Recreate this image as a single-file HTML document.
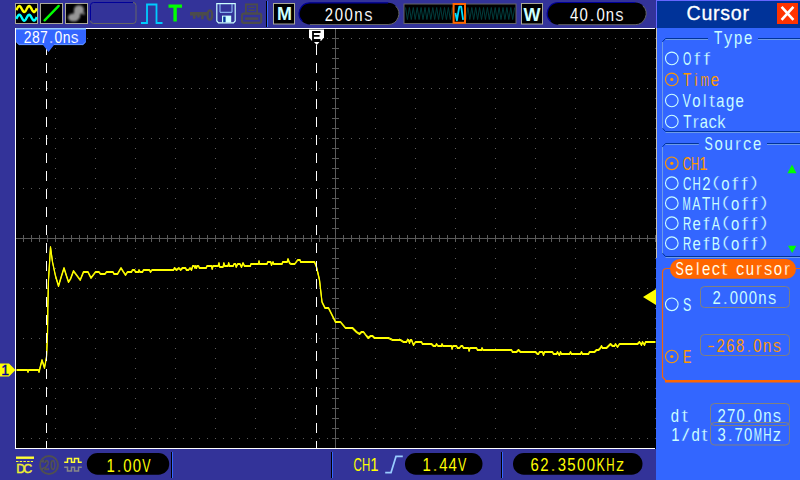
<!DOCTYPE html>
<html><head><meta charset="utf-8"><title>scope</title>
<style>
html,body{margin:0;padding:0;background:#333399;}
body{width:800px;height:480px;position:relative;overflow:hidden;font-family:"Liberation Sans",sans-serif;}
.a{position:absolute;box-sizing:border-box;}
.t{position:absolute;white-space:pre;line-height:1;}
svg{position:absolute;left:0;top:0;}
</style></head><body>

<div class="a" style="left:15px;top:28px;width:641px;height:421px;background:#000;"></div>
<div class="a" style="left:15px;top:28px;width:640px;height:421px;border-left:1px solid #fff;border-top:1px solid #fff;border-bottom:1px solid #fff;"></div>
<svg width="800" height="480" viewBox="0 0 800 480">
<g fill="#5a5a5a" shape-rendering="crispEdges">
<rect x="23" y="38" width="1" height="1"/>
<rect x="31" y="38" width="1" height="1"/>
<rect x="39" y="38" width="1" height="1"/>
<rect x="47" y="38" width="1" height="1"/>
<rect x="55" y="38" width="1" height="1"/>
<rect x="63" y="38" width="1" height="1"/>
<rect x="71" y="38" width="1" height="1"/>
<rect x="79" y="38" width="1" height="1"/>
<rect x="87" y="38" width="1" height="1"/>
<rect x="95" y="38" width="1" height="1"/>
<rect x="103" y="38" width="1" height="1"/>
<rect x="111" y="38" width="1" height="1"/>
<rect x="119" y="38" width="1" height="1"/>
<rect x="127" y="38" width="1" height="1"/>
<rect x="135" y="38" width="1" height="1"/>
<rect x="143" y="38" width="1" height="1"/>
<rect x="151" y="38" width="1" height="1"/>
<rect x="159" y="38" width="1" height="1"/>
<rect x="167" y="38" width="1" height="1"/>
<rect x="175" y="38" width="1" height="1"/>
<rect x="183" y="38" width="1" height="1"/>
<rect x="191" y="38" width="1" height="1"/>
<rect x="199" y="38" width="1" height="1"/>
<rect x="207" y="38" width="1" height="1"/>
<rect x="215" y="38" width="1" height="1"/>
<rect x="223" y="38" width="1" height="1"/>
<rect x="231" y="38" width="1" height="1"/>
<rect x="239" y="38" width="1" height="1"/>
<rect x="247" y="38" width="1" height="1"/>
<rect x="255" y="38" width="1" height="1"/>
<rect x="263" y="38" width="1" height="1"/>
<rect x="271" y="38" width="1" height="1"/>
<rect x="279" y="38" width="1" height="1"/>
<rect x="287" y="38" width="1" height="1"/>
<rect x="295" y="38" width="1" height="1"/>
<rect x="303" y="38" width="1" height="1"/>
<rect x="311" y="38" width="1" height="1"/>
<rect x="319" y="38" width="1" height="1"/>
<rect x="327" y="38" width="1" height="1"/>
<rect x="335" y="38" width="1" height="1"/>
<rect x="343" y="38" width="1" height="1"/>
<rect x="351" y="38" width="1" height="1"/>
<rect x="359" y="38" width="1" height="1"/>
<rect x="367" y="38" width="1" height="1"/>
<rect x="375" y="38" width="1" height="1"/>
<rect x="383" y="38" width="1" height="1"/>
<rect x="391" y="38" width="1" height="1"/>
<rect x="399" y="38" width="1" height="1"/>
<rect x="407" y="38" width="1" height="1"/>
<rect x="415" y="38" width="1" height="1"/>
<rect x="423" y="38" width="1" height="1"/>
<rect x="431" y="38" width="1" height="1"/>
<rect x="439" y="38" width="1" height="1"/>
<rect x="447" y="38" width="1" height="1"/>
<rect x="455" y="38" width="1" height="1"/>
<rect x="463" y="38" width="1" height="1"/>
<rect x="471" y="38" width="1" height="1"/>
<rect x="479" y="38" width="1" height="1"/>
<rect x="487" y="38" width="1" height="1"/>
<rect x="495" y="38" width="1" height="1"/>
<rect x="503" y="38" width="1" height="1"/>
<rect x="511" y="38" width="1" height="1"/>
<rect x="519" y="38" width="1" height="1"/>
<rect x="527" y="38" width="1" height="1"/>
<rect x="535" y="38" width="1" height="1"/>
<rect x="543" y="38" width="1" height="1"/>
<rect x="551" y="38" width="1" height="1"/>
<rect x="559" y="38" width="1" height="1"/>
<rect x="567" y="38" width="1" height="1"/>
<rect x="575" y="38" width="1" height="1"/>
<rect x="583" y="38" width="1" height="1"/>
<rect x="591" y="38" width="1" height="1"/>
<rect x="599" y="38" width="1" height="1"/>
<rect x="607" y="38" width="1" height="1"/>
<rect x="615" y="38" width="1" height="1"/>
<rect x="623" y="38" width="1" height="1"/>
<rect x="631" y="38" width="1" height="1"/>
<rect x="639" y="38" width="1" height="1"/>
<rect x="647" y="38" width="1" height="1"/>
<rect x="655" y="38" width="1" height="1"/>
<rect x="23" y="88" width="1" height="1"/>
<rect x="31" y="88" width="1" height="1"/>
<rect x="39" y="88" width="1" height="1"/>
<rect x="47" y="88" width="1" height="1"/>
<rect x="55" y="88" width="1" height="1"/>
<rect x="63" y="88" width="1" height="1"/>
<rect x="71" y="88" width="1" height="1"/>
<rect x="79" y="88" width="1" height="1"/>
<rect x="87" y="88" width="1" height="1"/>
<rect x="95" y="88" width="1" height="1"/>
<rect x="103" y="88" width="1" height="1"/>
<rect x="111" y="88" width="1" height="1"/>
<rect x="119" y="88" width="1" height="1"/>
<rect x="127" y="88" width="1" height="1"/>
<rect x="135" y="88" width="1" height="1"/>
<rect x="143" y="88" width="1" height="1"/>
<rect x="151" y="88" width="1" height="1"/>
<rect x="159" y="88" width="1" height="1"/>
<rect x="167" y="88" width="1" height="1"/>
<rect x="175" y="88" width="1" height="1"/>
<rect x="183" y="88" width="1" height="1"/>
<rect x="191" y="88" width="1" height="1"/>
<rect x="199" y="88" width="1" height="1"/>
<rect x="207" y="88" width="1" height="1"/>
<rect x="215" y="88" width="1" height="1"/>
<rect x="223" y="88" width="1" height="1"/>
<rect x="231" y="88" width="1" height="1"/>
<rect x="239" y="88" width="1" height="1"/>
<rect x="247" y="88" width="1" height="1"/>
<rect x="255" y="88" width="1" height="1"/>
<rect x="263" y="88" width="1" height="1"/>
<rect x="271" y="88" width="1" height="1"/>
<rect x="279" y="88" width="1" height="1"/>
<rect x="287" y="88" width="1" height="1"/>
<rect x="295" y="88" width="1" height="1"/>
<rect x="303" y="88" width="1" height="1"/>
<rect x="311" y="88" width="1" height="1"/>
<rect x="319" y="88" width="1" height="1"/>
<rect x="327" y="88" width="1" height="1"/>
<rect x="335" y="88" width="1" height="1"/>
<rect x="343" y="88" width="1" height="1"/>
<rect x="351" y="88" width="1" height="1"/>
<rect x="359" y="88" width="1" height="1"/>
<rect x="367" y="88" width="1" height="1"/>
<rect x="375" y="88" width="1" height="1"/>
<rect x="383" y="88" width="1" height="1"/>
<rect x="391" y="88" width="1" height="1"/>
<rect x="399" y="88" width="1" height="1"/>
<rect x="407" y="88" width="1" height="1"/>
<rect x="415" y="88" width="1" height="1"/>
<rect x="423" y="88" width="1" height="1"/>
<rect x="431" y="88" width="1" height="1"/>
<rect x="439" y="88" width="1" height="1"/>
<rect x="447" y="88" width="1" height="1"/>
<rect x="455" y="88" width="1" height="1"/>
<rect x="463" y="88" width="1" height="1"/>
<rect x="471" y="88" width="1" height="1"/>
<rect x="479" y="88" width="1" height="1"/>
<rect x="487" y="88" width="1" height="1"/>
<rect x="495" y="88" width="1" height="1"/>
<rect x="503" y="88" width="1" height="1"/>
<rect x="511" y="88" width="1" height="1"/>
<rect x="519" y="88" width="1" height="1"/>
<rect x="527" y="88" width="1" height="1"/>
<rect x="535" y="88" width="1" height="1"/>
<rect x="543" y="88" width="1" height="1"/>
<rect x="551" y="88" width="1" height="1"/>
<rect x="559" y="88" width="1" height="1"/>
<rect x="567" y="88" width="1" height="1"/>
<rect x="575" y="88" width="1" height="1"/>
<rect x="583" y="88" width="1" height="1"/>
<rect x="591" y="88" width="1" height="1"/>
<rect x="599" y="88" width="1" height="1"/>
<rect x="607" y="88" width="1" height="1"/>
<rect x="615" y="88" width="1" height="1"/>
<rect x="623" y="88" width="1" height="1"/>
<rect x="631" y="88" width="1" height="1"/>
<rect x="639" y="88" width="1" height="1"/>
<rect x="647" y="88" width="1" height="1"/>
<rect x="655" y="88" width="1" height="1"/>
<rect x="23" y="138" width="1" height="1"/>
<rect x="31" y="138" width="1" height="1"/>
<rect x="39" y="138" width="1" height="1"/>
<rect x="47" y="138" width="1" height="1"/>
<rect x="55" y="138" width="1" height="1"/>
<rect x="63" y="138" width="1" height="1"/>
<rect x="71" y="138" width="1" height="1"/>
<rect x="79" y="138" width="1" height="1"/>
<rect x="87" y="138" width="1" height="1"/>
<rect x="95" y="138" width="1" height="1"/>
<rect x="103" y="138" width="1" height="1"/>
<rect x="111" y="138" width="1" height="1"/>
<rect x="119" y="138" width="1" height="1"/>
<rect x="127" y="138" width="1" height="1"/>
<rect x="135" y="138" width="1" height="1"/>
<rect x="143" y="138" width="1" height="1"/>
<rect x="151" y="138" width="1" height="1"/>
<rect x="159" y="138" width="1" height="1"/>
<rect x="167" y="138" width="1" height="1"/>
<rect x="175" y="138" width="1" height="1"/>
<rect x="183" y="138" width="1" height="1"/>
<rect x="191" y="138" width="1" height="1"/>
<rect x="199" y="138" width="1" height="1"/>
<rect x="207" y="138" width="1" height="1"/>
<rect x="215" y="138" width="1" height="1"/>
<rect x="223" y="138" width="1" height="1"/>
<rect x="231" y="138" width="1" height="1"/>
<rect x="239" y="138" width="1" height="1"/>
<rect x="247" y="138" width="1" height="1"/>
<rect x="255" y="138" width="1" height="1"/>
<rect x="263" y="138" width="1" height="1"/>
<rect x="271" y="138" width="1" height="1"/>
<rect x="279" y="138" width="1" height="1"/>
<rect x="287" y="138" width="1" height="1"/>
<rect x="295" y="138" width="1" height="1"/>
<rect x="303" y="138" width="1" height="1"/>
<rect x="311" y="138" width="1" height="1"/>
<rect x="319" y="138" width="1" height="1"/>
<rect x="327" y="138" width="1" height="1"/>
<rect x="335" y="138" width="1" height="1"/>
<rect x="343" y="138" width="1" height="1"/>
<rect x="351" y="138" width="1" height="1"/>
<rect x="359" y="138" width="1" height="1"/>
<rect x="367" y="138" width="1" height="1"/>
<rect x="375" y="138" width="1" height="1"/>
<rect x="383" y="138" width="1" height="1"/>
<rect x="391" y="138" width="1" height="1"/>
<rect x="399" y="138" width="1" height="1"/>
<rect x="407" y="138" width="1" height="1"/>
<rect x="415" y="138" width="1" height="1"/>
<rect x="423" y="138" width="1" height="1"/>
<rect x="431" y="138" width="1" height="1"/>
<rect x="439" y="138" width="1" height="1"/>
<rect x="447" y="138" width="1" height="1"/>
<rect x="455" y="138" width="1" height="1"/>
<rect x="463" y="138" width="1" height="1"/>
<rect x="471" y="138" width="1" height="1"/>
<rect x="479" y="138" width="1" height="1"/>
<rect x="487" y="138" width="1" height="1"/>
<rect x="495" y="138" width="1" height="1"/>
<rect x="503" y="138" width="1" height="1"/>
<rect x="511" y="138" width="1" height="1"/>
<rect x="519" y="138" width="1" height="1"/>
<rect x="527" y="138" width="1" height="1"/>
<rect x="535" y="138" width="1" height="1"/>
<rect x="543" y="138" width="1" height="1"/>
<rect x="551" y="138" width="1" height="1"/>
<rect x="559" y="138" width="1" height="1"/>
<rect x="567" y="138" width="1" height="1"/>
<rect x="575" y="138" width="1" height="1"/>
<rect x="583" y="138" width="1" height="1"/>
<rect x="591" y="138" width="1" height="1"/>
<rect x="599" y="138" width="1" height="1"/>
<rect x="607" y="138" width="1" height="1"/>
<rect x="615" y="138" width="1" height="1"/>
<rect x="623" y="138" width="1" height="1"/>
<rect x="631" y="138" width="1" height="1"/>
<rect x="639" y="138" width="1" height="1"/>
<rect x="647" y="138" width="1" height="1"/>
<rect x="655" y="138" width="1" height="1"/>
<rect x="23" y="188" width="1" height="1"/>
<rect x="31" y="188" width="1" height="1"/>
<rect x="39" y="188" width="1" height="1"/>
<rect x="47" y="188" width="1" height="1"/>
<rect x="55" y="188" width="1" height="1"/>
<rect x="63" y="188" width="1" height="1"/>
<rect x="71" y="188" width="1" height="1"/>
<rect x="79" y="188" width="1" height="1"/>
<rect x="87" y="188" width="1" height="1"/>
<rect x="95" y="188" width="1" height="1"/>
<rect x="103" y="188" width="1" height="1"/>
<rect x="111" y="188" width="1" height="1"/>
<rect x="119" y="188" width="1" height="1"/>
<rect x="127" y="188" width="1" height="1"/>
<rect x="135" y="188" width="1" height="1"/>
<rect x="143" y="188" width="1" height="1"/>
<rect x="151" y="188" width="1" height="1"/>
<rect x="159" y="188" width="1" height="1"/>
<rect x="167" y="188" width="1" height="1"/>
<rect x="175" y="188" width="1" height="1"/>
<rect x="183" y="188" width="1" height="1"/>
<rect x="191" y="188" width="1" height="1"/>
<rect x="199" y="188" width="1" height="1"/>
<rect x="207" y="188" width="1" height="1"/>
<rect x="215" y="188" width="1" height="1"/>
<rect x="223" y="188" width="1" height="1"/>
<rect x="231" y="188" width="1" height="1"/>
<rect x="239" y="188" width="1" height="1"/>
<rect x="247" y="188" width="1" height="1"/>
<rect x="255" y="188" width="1" height="1"/>
<rect x="263" y="188" width="1" height="1"/>
<rect x="271" y="188" width="1" height="1"/>
<rect x="279" y="188" width="1" height="1"/>
<rect x="287" y="188" width="1" height="1"/>
<rect x="295" y="188" width="1" height="1"/>
<rect x="303" y="188" width="1" height="1"/>
<rect x="311" y="188" width="1" height="1"/>
<rect x="319" y="188" width="1" height="1"/>
<rect x="327" y="188" width="1" height="1"/>
<rect x="335" y="188" width="1" height="1"/>
<rect x="343" y="188" width="1" height="1"/>
<rect x="351" y="188" width="1" height="1"/>
<rect x="359" y="188" width="1" height="1"/>
<rect x="367" y="188" width="1" height="1"/>
<rect x="375" y="188" width="1" height="1"/>
<rect x="383" y="188" width="1" height="1"/>
<rect x="391" y="188" width="1" height="1"/>
<rect x="399" y="188" width="1" height="1"/>
<rect x="407" y="188" width="1" height="1"/>
<rect x="415" y="188" width="1" height="1"/>
<rect x="423" y="188" width="1" height="1"/>
<rect x="431" y="188" width="1" height="1"/>
<rect x="439" y="188" width="1" height="1"/>
<rect x="447" y="188" width="1" height="1"/>
<rect x="455" y="188" width="1" height="1"/>
<rect x="463" y="188" width="1" height="1"/>
<rect x="471" y="188" width="1" height="1"/>
<rect x="479" y="188" width="1" height="1"/>
<rect x="487" y="188" width="1" height="1"/>
<rect x="495" y="188" width="1" height="1"/>
<rect x="503" y="188" width="1" height="1"/>
<rect x="511" y="188" width="1" height="1"/>
<rect x="519" y="188" width="1" height="1"/>
<rect x="527" y="188" width="1" height="1"/>
<rect x="535" y="188" width="1" height="1"/>
<rect x="543" y="188" width="1" height="1"/>
<rect x="551" y="188" width="1" height="1"/>
<rect x="559" y="188" width="1" height="1"/>
<rect x="567" y="188" width="1" height="1"/>
<rect x="575" y="188" width="1" height="1"/>
<rect x="583" y="188" width="1" height="1"/>
<rect x="591" y="188" width="1" height="1"/>
<rect x="599" y="188" width="1" height="1"/>
<rect x="607" y="188" width="1" height="1"/>
<rect x="615" y="188" width="1" height="1"/>
<rect x="623" y="188" width="1" height="1"/>
<rect x="631" y="188" width="1" height="1"/>
<rect x="639" y="188" width="1" height="1"/>
<rect x="647" y="188" width="1" height="1"/>
<rect x="655" y="188" width="1" height="1"/>
<rect x="23" y="288" width="1" height="1"/>
<rect x="31" y="288" width="1" height="1"/>
<rect x="39" y="288" width="1" height="1"/>
<rect x="47" y="288" width="1" height="1"/>
<rect x="55" y="288" width="1" height="1"/>
<rect x="63" y="288" width="1" height="1"/>
<rect x="71" y="288" width="1" height="1"/>
<rect x="79" y="288" width="1" height="1"/>
<rect x="87" y="288" width="1" height="1"/>
<rect x="95" y="288" width="1" height="1"/>
<rect x="103" y="288" width="1" height="1"/>
<rect x="111" y="288" width="1" height="1"/>
<rect x="119" y="288" width="1" height="1"/>
<rect x="127" y="288" width="1" height="1"/>
<rect x="135" y="288" width="1" height="1"/>
<rect x="143" y="288" width="1" height="1"/>
<rect x="151" y="288" width="1" height="1"/>
<rect x="159" y="288" width="1" height="1"/>
<rect x="167" y="288" width="1" height="1"/>
<rect x="175" y="288" width="1" height="1"/>
<rect x="183" y="288" width="1" height="1"/>
<rect x="191" y="288" width="1" height="1"/>
<rect x="199" y="288" width="1" height="1"/>
<rect x="207" y="288" width="1" height="1"/>
<rect x="215" y="288" width="1" height="1"/>
<rect x="223" y="288" width="1" height="1"/>
<rect x="231" y="288" width="1" height="1"/>
<rect x="239" y="288" width="1" height="1"/>
<rect x="247" y="288" width="1" height="1"/>
<rect x="255" y="288" width="1" height="1"/>
<rect x="263" y="288" width="1" height="1"/>
<rect x="271" y="288" width="1" height="1"/>
<rect x="279" y="288" width="1" height="1"/>
<rect x="287" y="288" width="1" height="1"/>
<rect x="295" y="288" width="1" height="1"/>
<rect x="303" y="288" width="1" height="1"/>
<rect x="311" y="288" width="1" height="1"/>
<rect x="319" y="288" width="1" height="1"/>
<rect x="327" y="288" width="1" height="1"/>
<rect x="335" y="288" width="1" height="1"/>
<rect x="343" y="288" width="1" height="1"/>
<rect x="351" y="288" width="1" height="1"/>
<rect x="359" y="288" width="1" height="1"/>
<rect x="367" y="288" width="1" height="1"/>
<rect x="375" y="288" width="1" height="1"/>
<rect x="383" y="288" width="1" height="1"/>
<rect x="391" y="288" width="1" height="1"/>
<rect x="399" y="288" width="1" height="1"/>
<rect x="407" y="288" width="1" height="1"/>
<rect x="415" y="288" width="1" height="1"/>
<rect x="423" y="288" width="1" height="1"/>
<rect x="431" y="288" width="1" height="1"/>
<rect x="439" y="288" width="1" height="1"/>
<rect x="447" y="288" width="1" height="1"/>
<rect x="455" y="288" width="1" height="1"/>
<rect x="463" y="288" width="1" height="1"/>
<rect x="471" y="288" width="1" height="1"/>
<rect x="479" y="288" width="1" height="1"/>
<rect x="487" y="288" width="1" height="1"/>
<rect x="495" y="288" width="1" height="1"/>
<rect x="503" y="288" width="1" height="1"/>
<rect x="511" y="288" width="1" height="1"/>
<rect x="519" y="288" width="1" height="1"/>
<rect x="527" y="288" width="1" height="1"/>
<rect x="535" y="288" width="1" height="1"/>
<rect x="543" y="288" width="1" height="1"/>
<rect x="551" y="288" width="1" height="1"/>
<rect x="559" y="288" width="1" height="1"/>
<rect x="567" y="288" width="1" height="1"/>
<rect x="575" y="288" width="1" height="1"/>
<rect x="583" y="288" width="1" height="1"/>
<rect x="591" y="288" width="1" height="1"/>
<rect x="599" y="288" width="1" height="1"/>
<rect x="607" y="288" width="1" height="1"/>
<rect x="615" y="288" width="1" height="1"/>
<rect x="623" y="288" width="1" height="1"/>
<rect x="631" y="288" width="1" height="1"/>
<rect x="639" y="288" width="1" height="1"/>
<rect x="647" y="288" width="1" height="1"/>
<rect x="655" y="288" width="1" height="1"/>
<rect x="23" y="338" width="1" height="1"/>
<rect x="31" y="338" width="1" height="1"/>
<rect x="39" y="338" width="1" height="1"/>
<rect x="47" y="338" width="1" height="1"/>
<rect x="55" y="338" width="1" height="1"/>
<rect x="63" y="338" width="1" height="1"/>
<rect x="71" y="338" width="1" height="1"/>
<rect x="79" y="338" width="1" height="1"/>
<rect x="87" y="338" width="1" height="1"/>
<rect x="95" y="338" width="1" height="1"/>
<rect x="103" y="338" width="1" height="1"/>
<rect x="111" y="338" width="1" height="1"/>
<rect x="119" y="338" width="1" height="1"/>
<rect x="127" y="338" width="1" height="1"/>
<rect x="135" y="338" width="1" height="1"/>
<rect x="143" y="338" width="1" height="1"/>
<rect x="151" y="338" width="1" height="1"/>
<rect x="159" y="338" width="1" height="1"/>
<rect x="167" y="338" width="1" height="1"/>
<rect x="175" y="338" width="1" height="1"/>
<rect x="183" y="338" width="1" height="1"/>
<rect x="191" y="338" width="1" height="1"/>
<rect x="199" y="338" width="1" height="1"/>
<rect x="207" y="338" width="1" height="1"/>
<rect x="215" y="338" width="1" height="1"/>
<rect x="223" y="338" width="1" height="1"/>
<rect x="231" y="338" width="1" height="1"/>
<rect x="239" y="338" width="1" height="1"/>
<rect x="247" y="338" width="1" height="1"/>
<rect x="255" y="338" width="1" height="1"/>
<rect x="263" y="338" width="1" height="1"/>
<rect x="271" y="338" width="1" height="1"/>
<rect x="279" y="338" width="1" height="1"/>
<rect x="287" y="338" width="1" height="1"/>
<rect x="295" y="338" width="1" height="1"/>
<rect x="303" y="338" width="1" height="1"/>
<rect x="311" y="338" width="1" height="1"/>
<rect x="319" y="338" width="1" height="1"/>
<rect x="327" y="338" width="1" height="1"/>
<rect x="335" y="338" width="1" height="1"/>
<rect x="343" y="338" width="1" height="1"/>
<rect x="351" y="338" width="1" height="1"/>
<rect x="359" y="338" width="1" height="1"/>
<rect x="367" y="338" width="1" height="1"/>
<rect x="375" y="338" width="1" height="1"/>
<rect x="383" y="338" width="1" height="1"/>
<rect x="391" y="338" width="1" height="1"/>
<rect x="399" y="338" width="1" height="1"/>
<rect x="407" y="338" width="1" height="1"/>
<rect x="415" y="338" width="1" height="1"/>
<rect x="423" y="338" width="1" height="1"/>
<rect x="431" y="338" width="1" height="1"/>
<rect x="439" y="338" width="1" height="1"/>
<rect x="447" y="338" width="1" height="1"/>
<rect x="455" y="338" width="1" height="1"/>
<rect x="463" y="338" width="1" height="1"/>
<rect x="471" y="338" width="1" height="1"/>
<rect x="479" y="338" width="1" height="1"/>
<rect x="487" y="338" width="1" height="1"/>
<rect x="495" y="338" width="1" height="1"/>
<rect x="503" y="338" width="1" height="1"/>
<rect x="511" y="338" width="1" height="1"/>
<rect x="519" y="338" width="1" height="1"/>
<rect x="527" y="338" width="1" height="1"/>
<rect x="535" y="338" width="1" height="1"/>
<rect x="543" y="338" width="1" height="1"/>
<rect x="551" y="338" width="1" height="1"/>
<rect x="559" y="338" width="1" height="1"/>
<rect x="567" y="338" width="1" height="1"/>
<rect x="575" y="338" width="1" height="1"/>
<rect x="583" y="338" width="1" height="1"/>
<rect x="591" y="338" width="1" height="1"/>
<rect x="599" y="338" width="1" height="1"/>
<rect x="607" y="338" width="1" height="1"/>
<rect x="615" y="338" width="1" height="1"/>
<rect x="623" y="338" width="1" height="1"/>
<rect x="631" y="338" width="1" height="1"/>
<rect x="639" y="338" width="1" height="1"/>
<rect x="647" y="338" width="1" height="1"/>
<rect x="655" y="338" width="1" height="1"/>
<rect x="23" y="388" width="1" height="1"/>
<rect x="31" y="388" width="1" height="1"/>
<rect x="39" y="388" width="1" height="1"/>
<rect x="47" y="388" width="1" height="1"/>
<rect x="55" y="388" width="1" height="1"/>
<rect x="63" y="388" width="1" height="1"/>
<rect x="71" y="388" width="1" height="1"/>
<rect x="79" y="388" width="1" height="1"/>
<rect x="87" y="388" width="1" height="1"/>
<rect x="95" y="388" width="1" height="1"/>
<rect x="103" y="388" width="1" height="1"/>
<rect x="111" y="388" width="1" height="1"/>
<rect x="119" y="388" width="1" height="1"/>
<rect x="127" y="388" width="1" height="1"/>
<rect x="135" y="388" width="1" height="1"/>
<rect x="143" y="388" width="1" height="1"/>
<rect x="151" y="388" width="1" height="1"/>
<rect x="159" y="388" width="1" height="1"/>
<rect x="167" y="388" width="1" height="1"/>
<rect x="175" y="388" width="1" height="1"/>
<rect x="183" y="388" width="1" height="1"/>
<rect x="191" y="388" width="1" height="1"/>
<rect x="199" y="388" width="1" height="1"/>
<rect x="207" y="388" width="1" height="1"/>
<rect x="215" y="388" width="1" height="1"/>
<rect x="223" y="388" width="1" height="1"/>
<rect x="231" y="388" width="1" height="1"/>
<rect x="239" y="388" width="1" height="1"/>
<rect x="247" y="388" width="1" height="1"/>
<rect x="255" y="388" width="1" height="1"/>
<rect x="263" y="388" width="1" height="1"/>
<rect x="271" y="388" width="1" height="1"/>
<rect x="279" y="388" width="1" height="1"/>
<rect x="287" y="388" width="1" height="1"/>
<rect x="295" y="388" width="1" height="1"/>
<rect x="303" y="388" width="1" height="1"/>
<rect x="311" y="388" width="1" height="1"/>
<rect x="319" y="388" width="1" height="1"/>
<rect x="327" y="388" width="1" height="1"/>
<rect x="335" y="388" width="1" height="1"/>
<rect x="343" y="388" width="1" height="1"/>
<rect x="351" y="388" width="1" height="1"/>
<rect x="359" y="388" width="1" height="1"/>
<rect x="367" y="388" width="1" height="1"/>
<rect x="375" y="388" width="1" height="1"/>
<rect x="383" y="388" width="1" height="1"/>
<rect x="391" y="388" width="1" height="1"/>
<rect x="399" y="388" width="1" height="1"/>
<rect x="407" y="388" width="1" height="1"/>
<rect x="415" y="388" width="1" height="1"/>
<rect x="423" y="388" width="1" height="1"/>
<rect x="431" y="388" width="1" height="1"/>
<rect x="439" y="388" width="1" height="1"/>
<rect x="447" y="388" width="1" height="1"/>
<rect x="455" y="388" width="1" height="1"/>
<rect x="463" y="388" width="1" height="1"/>
<rect x="471" y="388" width="1" height="1"/>
<rect x="479" y="388" width="1" height="1"/>
<rect x="487" y="388" width="1" height="1"/>
<rect x="495" y="388" width="1" height="1"/>
<rect x="503" y="388" width="1" height="1"/>
<rect x="511" y="388" width="1" height="1"/>
<rect x="519" y="388" width="1" height="1"/>
<rect x="527" y="388" width="1" height="1"/>
<rect x="535" y="388" width="1" height="1"/>
<rect x="543" y="388" width="1" height="1"/>
<rect x="551" y="388" width="1" height="1"/>
<rect x="559" y="388" width="1" height="1"/>
<rect x="567" y="388" width="1" height="1"/>
<rect x="575" y="388" width="1" height="1"/>
<rect x="583" y="388" width="1" height="1"/>
<rect x="591" y="388" width="1" height="1"/>
<rect x="599" y="388" width="1" height="1"/>
<rect x="607" y="388" width="1" height="1"/>
<rect x="615" y="388" width="1" height="1"/>
<rect x="623" y="388" width="1" height="1"/>
<rect x="631" y="388" width="1" height="1"/>
<rect x="639" y="388" width="1" height="1"/>
<rect x="647" y="388" width="1" height="1"/>
<rect x="655" y="388" width="1" height="1"/>
<rect x="23" y="438" width="1" height="1"/>
<rect x="31" y="438" width="1" height="1"/>
<rect x="39" y="438" width="1" height="1"/>
<rect x="47" y="438" width="1" height="1"/>
<rect x="55" y="438" width="1" height="1"/>
<rect x="63" y="438" width="1" height="1"/>
<rect x="71" y="438" width="1" height="1"/>
<rect x="79" y="438" width="1" height="1"/>
<rect x="87" y="438" width="1" height="1"/>
<rect x="95" y="438" width="1" height="1"/>
<rect x="103" y="438" width="1" height="1"/>
<rect x="111" y="438" width="1" height="1"/>
<rect x="119" y="438" width="1" height="1"/>
<rect x="127" y="438" width="1" height="1"/>
<rect x="135" y="438" width="1" height="1"/>
<rect x="143" y="438" width="1" height="1"/>
<rect x="151" y="438" width="1" height="1"/>
<rect x="159" y="438" width="1" height="1"/>
<rect x="167" y="438" width="1" height="1"/>
<rect x="175" y="438" width="1" height="1"/>
<rect x="183" y="438" width="1" height="1"/>
<rect x="191" y="438" width="1" height="1"/>
<rect x="199" y="438" width="1" height="1"/>
<rect x="207" y="438" width="1" height="1"/>
<rect x="215" y="438" width="1" height="1"/>
<rect x="223" y="438" width="1" height="1"/>
<rect x="231" y="438" width="1" height="1"/>
<rect x="239" y="438" width="1" height="1"/>
<rect x="247" y="438" width="1" height="1"/>
<rect x="255" y="438" width="1" height="1"/>
<rect x="263" y="438" width="1" height="1"/>
<rect x="271" y="438" width="1" height="1"/>
<rect x="279" y="438" width="1" height="1"/>
<rect x="287" y="438" width="1" height="1"/>
<rect x="295" y="438" width="1" height="1"/>
<rect x="303" y="438" width="1" height="1"/>
<rect x="311" y="438" width="1" height="1"/>
<rect x="319" y="438" width="1" height="1"/>
<rect x="327" y="438" width="1" height="1"/>
<rect x="335" y="438" width="1" height="1"/>
<rect x="343" y="438" width="1" height="1"/>
<rect x="351" y="438" width="1" height="1"/>
<rect x="359" y="438" width="1" height="1"/>
<rect x="367" y="438" width="1" height="1"/>
<rect x="375" y="438" width="1" height="1"/>
<rect x="383" y="438" width="1" height="1"/>
<rect x="391" y="438" width="1" height="1"/>
<rect x="399" y="438" width="1" height="1"/>
<rect x="407" y="438" width="1" height="1"/>
<rect x="415" y="438" width="1" height="1"/>
<rect x="423" y="438" width="1" height="1"/>
<rect x="431" y="438" width="1" height="1"/>
<rect x="439" y="438" width="1" height="1"/>
<rect x="447" y="438" width="1" height="1"/>
<rect x="455" y="438" width="1" height="1"/>
<rect x="463" y="438" width="1" height="1"/>
<rect x="471" y="438" width="1" height="1"/>
<rect x="479" y="438" width="1" height="1"/>
<rect x="487" y="438" width="1" height="1"/>
<rect x="495" y="438" width="1" height="1"/>
<rect x="503" y="438" width="1" height="1"/>
<rect x="511" y="438" width="1" height="1"/>
<rect x="519" y="438" width="1" height="1"/>
<rect x="527" y="438" width="1" height="1"/>
<rect x="535" y="438" width="1" height="1"/>
<rect x="543" y="438" width="1" height="1"/>
<rect x="551" y="438" width="1" height="1"/>
<rect x="559" y="438" width="1" height="1"/>
<rect x="567" y="438" width="1" height="1"/>
<rect x="575" y="438" width="1" height="1"/>
<rect x="583" y="438" width="1" height="1"/>
<rect x="591" y="438" width="1" height="1"/>
<rect x="599" y="438" width="1" height="1"/>
<rect x="607" y="438" width="1" height="1"/>
<rect x="615" y="438" width="1" height="1"/>
<rect x="623" y="438" width="1" height="1"/>
<rect x="631" y="438" width="1" height="1"/>
<rect x="639" y="438" width="1" height="1"/>
<rect x="647" y="438" width="1" height="1"/>
<rect x="655" y="438" width="1" height="1"/>
<rect x="55" y="48" width="1" height="1"/>
<rect x="55" y="58" width="1" height="1"/>
<rect x="55" y="68" width="1" height="1"/>
<rect x="55" y="78" width="1" height="1"/>
<rect x="55" y="98" width="1" height="1"/>
<rect x="55" y="108" width="1" height="1"/>
<rect x="55" y="118" width="1" height="1"/>
<rect x="55" y="128" width="1" height="1"/>
<rect x="55" y="148" width="1" height="1"/>
<rect x="55" y="158" width="1" height="1"/>
<rect x="55" y="168" width="1" height="1"/>
<rect x="55" y="178" width="1" height="1"/>
<rect x="55" y="198" width="1" height="1"/>
<rect x="55" y="208" width="1" height="1"/>
<rect x="55" y="218" width="1" height="1"/>
<rect x="55" y="228" width="1" height="1"/>
<rect x="55" y="238" width="1" height="1"/>
<rect x="55" y="248" width="1" height="1"/>
<rect x="55" y="258" width="1" height="1"/>
<rect x="55" y="268" width="1" height="1"/>
<rect x="55" y="278" width="1" height="1"/>
<rect x="55" y="298" width="1" height="1"/>
<rect x="55" y="308" width="1" height="1"/>
<rect x="55" y="318" width="1" height="1"/>
<rect x="55" y="328" width="1" height="1"/>
<rect x="55" y="348" width="1" height="1"/>
<rect x="55" y="358" width="1" height="1"/>
<rect x="55" y="368" width="1" height="1"/>
<rect x="55" y="378" width="1" height="1"/>
<rect x="55" y="398" width="1" height="1"/>
<rect x="55" y="408" width="1" height="1"/>
<rect x="55" y="418" width="1" height="1"/>
<rect x="55" y="428" width="1" height="1"/>
<rect x="95" y="48" width="1" height="1"/>
<rect x="95" y="58" width="1" height="1"/>
<rect x="95" y="68" width="1" height="1"/>
<rect x="95" y="78" width="1" height="1"/>
<rect x="95" y="98" width="1" height="1"/>
<rect x="95" y="108" width="1" height="1"/>
<rect x="95" y="118" width="1" height="1"/>
<rect x="95" y="128" width="1" height="1"/>
<rect x="95" y="148" width="1" height="1"/>
<rect x="95" y="158" width="1" height="1"/>
<rect x="95" y="168" width="1" height="1"/>
<rect x="95" y="178" width="1" height="1"/>
<rect x="95" y="198" width="1" height="1"/>
<rect x="95" y="208" width="1" height="1"/>
<rect x="95" y="218" width="1" height="1"/>
<rect x="95" y="228" width="1" height="1"/>
<rect x="95" y="238" width="1" height="1"/>
<rect x="95" y="248" width="1" height="1"/>
<rect x="95" y="258" width="1" height="1"/>
<rect x="95" y="268" width="1" height="1"/>
<rect x="95" y="278" width="1" height="1"/>
<rect x="95" y="298" width="1" height="1"/>
<rect x="95" y="308" width="1" height="1"/>
<rect x="95" y="318" width="1" height="1"/>
<rect x="95" y="328" width="1" height="1"/>
<rect x="95" y="348" width="1" height="1"/>
<rect x="95" y="358" width="1" height="1"/>
<rect x="95" y="368" width="1" height="1"/>
<rect x="95" y="378" width="1" height="1"/>
<rect x="95" y="398" width="1" height="1"/>
<rect x="95" y="408" width="1" height="1"/>
<rect x="95" y="418" width="1" height="1"/>
<rect x="95" y="428" width="1" height="1"/>
<rect x="135" y="48" width="1" height="1"/>
<rect x="135" y="58" width="1" height="1"/>
<rect x="135" y="68" width="1" height="1"/>
<rect x="135" y="78" width="1" height="1"/>
<rect x="135" y="98" width="1" height="1"/>
<rect x="135" y="108" width="1" height="1"/>
<rect x="135" y="118" width="1" height="1"/>
<rect x="135" y="128" width="1" height="1"/>
<rect x="135" y="148" width="1" height="1"/>
<rect x="135" y="158" width="1" height="1"/>
<rect x="135" y="168" width="1" height="1"/>
<rect x="135" y="178" width="1" height="1"/>
<rect x="135" y="198" width="1" height="1"/>
<rect x="135" y="208" width="1" height="1"/>
<rect x="135" y="218" width="1" height="1"/>
<rect x="135" y="228" width="1" height="1"/>
<rect x="135" y="238" width="1" height="1"/>
<rect x="135" y="248" width="1" height="1"/>
<rect x="135" y="258" width="1" height="1"/>
<rect x="135" y="268" width="1" height="1"/>
<rect x="135" y="278" width="1" height="1"/>
<rect x="135" y="298" width="1" height="1"/>
<rect x="135" y="308" width="1" height="1"/>
<rect x="135" y="318" width="1" height="1"/>
<rect x="135" y="328" width="1" height="1"/>
<rect x="135" y="348" width="1" height="1"/>
<rect x="135" y="358" width="1" height="1"/>
<rect x="135" y="368" width="1" height="1"/>
<rect x="135" y="378" width="1" height="1"/>
<rect x="135" y="398" width="1" height="1"/>
<rect x="135" y="408" width="1" height="1"/>
<rect x="135" y="418" width="1" height="1"/>
<rect x="135" y="428" width="1" height="1"/>
<rect x="175" y="48" width="1" height="1"/>
<rect x="175" y="58" width="1" height="1"/>
<rect x="175" y="68" width="1" height="1"/>
<rect x="175" y="78" width="1" height="1"/>
<rect x="175" y="98" width="1" height="1"/>
<rect x="175" y="108" width="1" height="1"/>
<rect x="175" y="118" width="1" height="1"/>
<rect x="175" y="128" width="1" height="1"/>
<rect x="175" y="148" width="1" height="1"/>
<rect x="175" y="158" width="1" height="1"/>
<rect x="175" y="168" width="1" height="1"/>
<rect x="175" y="178" width="1" height="1"/>
<rect x="175" y="198" width="1" height="1"/>
<rect x="175" y="208" width="1" height="1"/>
<rect x="175" y="218" width="1" height="1"/>
<rect x="175" y="228" width="1" height="1"/>
<rect x="175" y="238" width="1" height="1"/>
<rect x="175" y="248" width="1" height="1"/>
<rect x="175" y="258" width="1" height="1"/>
<rect x="175" y="268" width="1" height="1"/>
<rect x="175" y="278" width="1" height="1"/>
<rect x="175" y="298" width="1" height="1"/>
<rect x="175" y="308" width="1" height="1"/>
<rect x="175" y="318" width="1" height="1"/>
<rect x="175" y="328" width="1" height="1"/>
<rect x="175" y="348" width="1" height="1"/>
<rect x="175" y="358" width="1" height="1"/>
<rect x="175" y="368" width="1" height="1"/>
<rect x="175" y="378" width="1" height="1"/>
<rect x="175" y="398" width="1" height="1"/>
<rect x="175" y="408" width="1" height="1"/>
<rect x="175" y="418" width="1" height="1"/>
<rect x="175" y="428" width="1" height="1"/>
<rect x="215" y="48" width="1" height="1"/>
<rect x="215" y="58" width="1" height="1"/>
<rect x="215" y="68" width="1" height="1"/>
<rect x="215" y="78" width="1" height="1"/>
<rect x="215" y="98" width="1" height="1"/>
<rect x="215" y="108" width="1" height="1"/>
<rect x="215" y="118" width="1" height="1"/>
<rect x="215" y="128" width="1" height="1"/>
<rect x="215" y="148" width="1" height="1"/>
<rect x="215" y="158" width="1" height="1"/>
<rect x="215" y="168" width="1" height="1"/>
<rect x="215" y="178" width="1" height="1"/>
<rect x="215" y="198" width="1" height="1"/>
<rect x="215" y="208" width="1" height="1"/>
<rect x="215" y="218" width="1" height="1"/>
<rect x="215" y="228" width="1" height="1"/>
<rect x="215" y="238" width="1" height="1"/>
<rect x="215" y="248" width="1" height="1"/>
<rect x="215" y="258" width="1" height="1"/>
<rect x="215" y="268" width="1" height="1"/>
<rect x="215" y="278" width="1" height="1"/>
<rect x="215" y="298" width="1" height="1"/>
<rect x="215" y="308" width="1" height="1"/>
<rect x="215" y="318" width="1" height="1"/>
<rect x="215" y="328" width="1" height="1"/>
<rect x="215" y="348" width="1" height="1"/>
<rect x="215" y="358" width="1" height="1"/>
<rect x="215" y="368" width="1" height="1"/>
<rect x="215" y="378" width="1" height="1"/>
<rect x="215" y="398" width="1" height="1"/>
<rect x="215" y="408" width="1" height="1"/>
<rect x="215" y="418" width="1" height="1"/>
<rect x="215" y="428" width="1" height="1"/>
<rect x="255" y="48" width="1" height="1"/>
<rect x="255" y="58" width="1" height="1"/>
<rect x="255" y="68" width="1" height="1"/>
<rect x="255" y="78" width="1" height="1"/>
<rect x="255" y="98" width="1" height="1"/>
<rect x="255" y="108" width="1" height="1"/>
<rect x="255" y="118" width="1" height="1"/>
<rect x="255" y="128" width="1" height="1"/>
<rect x="255" y="148" width="1" height="1"/>
<rect x="255" y="158" width="1" height="1"/>
<rect x="255" y="168" width="1" height="1"/>
<rect x="255" y="178" width="1" height="1"/>
<rect x="255" y="198" width="1" height="1"/>
<rect x="255" y="208" width="1" height="1"/>
<rect x="255" y="218" width="1" height="1"/>
<rect x="255" y="228" width="1" height="1"/>
<rect x="255" y="238" width="1" height="1"/>
<rect x="255" y="248" width="1" height="1"/>
<rect x="255" y="258" width="1" height="1"/>
<rect x="255" y="268" width="1" height="1"/>
<rect x="255" y="278" width="1" height="1"/>
<rect x="255" y="298" width="1" height="1"/>
<rect x="255" y="308" width="1" height="1"/>
<rect x="255" y="318" width="1" height="1"/>
<rect x="255" y="328" width="1" height="1"/>
<rect x="255" y="348" width="1" height="1"/>
<rect x="255" y="358" width="1" height="1"/>
<rect x="255" y="368" width="1" height="1"/>
<rect x="255" y="378" width="1" height="1"/>
<rect x="255" y="398" width="1" height="1"/>
<rect x="255" y="408" width="1" height="1"/>
<rect x="255" y="418" width="1" height="1"/>
<rect x="255" y="428" width="1" height="1"/>
<rect x="295" y="48" width="1" height="1"/>
<rect x="295" y="58" width="1" height="1"/>
<rect x="295" y="68" width="1" height="1"/>
<rect x="295" y="78" width="1" height="1"/>
<rect x="295" y="98" width="1" height="1"/>
<rect x="295" y="108" width="1" height="1"/>
<rect x="295" y="118" width="1" height="1"/>
<rect x="295" y="128" width="1" height="1"/>
<rect x="295" y="148" width="1" height="1"/>
<rect x="295" y="158" width="1" height="1"/>
<rect x="295" y="168" width="1" height="1"/>
<rect x="295" y="178" width="1" height="1"/>
<rect x="295" y="198" width="1" height="1"/>
<rect x="295" y="208" width="1" height="1"/>
<rect x="295" y="218" width="1" height="1"/>
<rect x="295" y="228" width="1" height="1"/>
<rect x="295" y="238" width="1" height="1"/>
<rect x="295" y="248" width="1" height="1"/>
<rect x="295" y="258" width="1" height="1"/>
<rect x="295" y="268" width="1" height="1"/>
<rect x="295" y="278" width="1" height="1"/>
<rect x="295" y="298" width="1" height="1"/>
<rect x="295" y="308" width="1" height="1"/>
<rect x="295" y="318" width="1" height="1"/>
<rect x="295" y="328" width="1" height="1"/>
<rect x="295" y="348" width="1" height="1"/>
<rect x="295" y="358" width="1" height="1"/>
<rect x="295" y="368" width="1" height="1"/>
<rect x="295" y="378" width="1" height="1"/>
<rect x="295" y="398" width="1" height="1"/>
<rect x="295" y="408" width="1" height="1"/>
<rect x="295" y="418" width="1" height="1"/>
<rect x="295" y="428" width="1" height="1"/>
<rect x="375" y="48" width="1" height="1"/>
<rect x="375" y="58" width="1" height="1"/>
<rect x="375" y="68" width="1" height="1"/>
<rect x="375" y="78" width="1" height="1"/>
<rect x="375" y="98" width="1" height="1"/>
<rect x="375" y="108" width="1" height="1"/>
<rect x="375" y="118" width="1" height="1"/>
<rect x="375" y="128" width="1" height="1"/>
<rect x="375" y="148" width="1" height="1"/>
<rect x="375" y="158" width="1" height="1"/>
<rect x="375" y="168" width="1" height="1"/>
<rect x="375" y="178" width="1" height="1"/>
<rect x="375" y="198" width="1" height="1"/>
<rect x="375" y="208" width="1" height="1"/>
<rect x="375" y="218" width="1" height="1"/>
<rect x="375" y="228" width="1" height="1"/>
<rect x="375" y="238" width="1" height="1"/>
<rect x="375" y="248" width="1" height="1"/>
<rect x="375" y="258" width="1" height="1"/>
<rect x="375" y="268" width="1" height="1"/>
<rect x="375" y="278" width="1" height="1"/>
<rect x="375" y="298" width="1" height="1"/>
<rect x="375" y="308" width="1" height="1"/>
<rect x="375" y="318" width="1" height="1"/>
<rect x="375" y="328" width="1" height="1"/>
<rect x="375" y="348" width="1" height="1"/>
<rect x="375" y="358" width="1" height="1"/>
<rect x="375" y="368" width="1" height="1"/>
<rect x="375" y="378" width="1" height="1"/>
<rect x="375" y="398" width="1" height="1"/>
<rect x="375" y="408" width="1" height="1"/>
<rect x="375" y="418" width="1" height="1"/>
<rect x="375" y="428" width="1" height="1"/>
<rect x="415" y="48" width="1" height="1"/>
<rect x="415" y="58" width="1" height="1"/>
<rect x="415" y="68" width="1" height="1"/>
<rect x="415" y="78" width="1" height="1"/>
<rect x="415" y="98" width="1" height="1"/>
<rect x="415" y="108" width="1" height="1"/>
<rect x="415" y="118" width="1" height="1"/>
<rect x="415" y="128" width="1" height="1"/>
<rect x="415" y="148" width="1" height="1"/>
<rect x="415" y="158" width="1" height="1"/>
<rect x="415" y="168" width="1" height="1"/>
<rect x="415" y="178" width="1" height="1"/>
<rect x="415" y="198" width="1" height="1"/>
<rect x="415" y="208" width="1" height="1"/>
<rect x="415" y="218" width="1" height="1"/>
<rect x="415" y="228" width="1" height="1"/>
<rect x="415" y="238" width="1" height="1"/>
<rect x="415" y="248" width="1" height="1"/>
<rect x="415" y="258" width="1" height="1"/>
<rect x="415" y="268" width="1" height="1"/>
<rect x="415" y="278" width="1" height="1"/>
<rect x="415" y="298" width="1" height="1"/>
<rect x="415" y="308" width="1" height="1"/>
<rect x="415" y="318" width="1" height="1"/>
<rect x="415" y="328" width="1" height="1"/>
<rect x="415" y="348" width="1" height="1"/>
<rect x="415" y="358" width="1" height="1"/>
<rect x="415" y="368" width="1" height="1"/>
<rect x="415" y="378" width="1" height="1"/>
<rect x="415" y="398" width="1" height="1"/>
<rect x="415" y="408" width="1" height="1"/>
<rect x="415" y="418" width="1" height="1"/>
<rect x="415" y="428" width="1" height="1"/>
<rect x="455" y="48" width="1" height="1"/>
<rect x="455" y="58" width="1" height="1"/>
<rect x="455" y="68" width="1" height="1"/>
<rect x="455" y="78" width="1" height="1"/>
<rect x="455" y="98" width="1" height="1"/>
<rect x="455" y="108" width="1" height="1"/>
<rect x="455" y="118" width="1" height="1"/>
<rect x="455" y="128" width="1" height="1"/>
<rect x="455" y="148" width="1" height="1"/>
<rect x="455" y="158" width="1" height="1"/>
<rect x="455" y="168" width="1" height="1"/>
<rect x="455" y="178" width="1" height="1"/>
<rect x="455" y="198" width="1" height="1"/>
<rect x="455" y="208" width="1" height="1"/>
<rect x="455" y="218" width="1" height="1"/>
<rect x="455" y="228" width="1" height="1"/>
<rect x="455" y="238" width="1" height="1"/>
<rect x="455" y="248" width="1" height="1"/>
<rect x="455" y="258" width="1" height="1"/>
<rect x="455" y="268" width="1" height="1"/>
<rect x="455" y="278" width="1" height="1"/>
<rect x="455" y="298" width="1" height="1"/>
<rect x="455" y="308" width="1" height="1"/>
<rect x="455" y="318" width="1" height="1"/>
<rect x="455" y="328" width="1" height="1"/>
<rect x="455" y="348" width="1" height="1"/>
<rect x="455" y="358" width="1" height="1"/>
<rect x="455" y="368" width="1" height="1"/>
<rect x="455" y="378" width="1" height="1"/>
<rect x="455" y="398" width="1" height="1"/>
<rect x="455" y="408" width="1" height="1"/>
<rect x="455" y="418" width="1" height="1"/>
<rect x="455" y="428" width="1" height="1"/>
<rect x="495" y="48" width="1" height="1"/>
<rect x="495" y="58" width="1" height="1"/>
<rect x="495" y="68" width="1" height="1"/>
<rect x="495" y="78" width="1" height="1"/>
<rect x="495" y="98" width="1" height="1"/>
<rect x="495" y="108" width="1" height="1"/>
<rect x="495" y="118" width="1" height="1"/>
<rect x="495" y="128" width="1" height="1"/>
<rect x="495" y="148" width="1" height="1"/>
<rect x="495" y="158" width="1" height="1"/>
<rect x="495" y="168" width="1" height="1"/>
<rect x="495" y="178" width="1" height="1"/>
<rect x="495" y="198" width="1" height="1"/>
<rect x="495" y="208" width="1" height="1"/>
<rect x="495" y="218" width="1" height="1"/>
<rect x="495" y="228" width="1" height="1"/>
<rect x="495" y="238" width="1" height="1"/>
<rect x="495" y="248" width="1" height="1"/>
<rect x="495" y="258" width="1" height="1"/>
<rect x="495" y="268" width="1" height="1"/>
<rect x="495" y="278" width="1" height="1"/>
<rect x="495" y="298" width="1" height="1"/>
<rect x="495" y="308" width="1" height="1"/>
<rect x="495" y="318" width="1" height="1"/>
<rect x="495" y="328" width="1" height="1"/>
<rect x="495" y="348" width="1" height="1"/>
<rect x="495" y="358" width="1" height="1"/>
<rect x="495" y="368" width="1" height="1"/>
<rect x="495" y="378" width="1" height="1"/>
<rect x="495" y="398" width="1" height="1"/>
<rect x="495" y="408" width="1" height="1"/>
<rect x="495" y="418" width="1" height="1"/>
<rect x="495" y="428" width="1" height="1"/>
<rect x="535" y="48" width="1" height="1"/>
<rect x="535" y="58" width="1" height="1"/>
<rect x="535" y="68" width="1" height="1"/>
<rect x="535" y="78" width="1" height="1"/>
<rect x="535" y="98" width="1" height="1"/>
<rect x="535" y="108" width="1" height="1"/>
<rect x="535" y="118" width="1" height="1"/>
<rect x="535" y="128" width="1" height="1"/>
<rect x="535" y="148" width="1" height="1"/>
<rect x="535" y="158" width="1" height="1"/>
<rect x="535" y="168" width="1" height="1"/>
<rect x="535" y="178" width="1" height="1"/>
<rect x="535" y="198" width="1" height="1"/>
<rect x="535" y="208" width="1" height="1"/>
<rect x="535" y="218" width="1" height="1"/>
<rect x="535" y="228" width="1" height="1"/>
<rect x="535" y="238" width="1" height="1"/>
<rect x="535" y="248" width="1" height="1"/>
<rect x="535" y="258" width="1" height="1"/>
<rect x="535" y="268" width="1" height="1"/>
<rect x="535" y="278" width="1" height="1"/>
<rect x="535" y="298" width="1" height="1"/>
<rect x="535" y="308" width="1" height="1"/>
<rect x="535" y="318" width="1" height="1"/>
<rect x="535" y="328" width="1" height="1"/>
<rect x="535" y="348" width="1" height="1"/>
<rect x="535" y="358" width="1" height="1"/>
<rect x="535" y="368" width="1" height="1"/>
<rect x="535" y="378" width="1" height="1"/>
<rect x="535" y="398" width="1" height="1"/>
<rect x="535" y="408" width="1" height="1"/>
<rect x="535" y="418" width="1" height="1"/>
<rect x="535" y="428" width="1" height="1"/>
<rect x="575" y="48" width="1" height="1"/>
<rect x="575" y="58" width="1" height="1"/>
<rect x="575" y="68" width="1" height="1"/>
<rect x="575" y="78" width="1" height="1"/>
<rect x="575" y="98" width="1" height="1"/>
<rect x="575" y="108" width="1" height="1"/>
<rect x="575" y="118" width="1" height="1"/>
<rect x="575" y="128" width="1" height="1"/>
<rect x="575" y="148" width="1" height="1"/>
<rect x="575" y="158" width="1" height="1"/>
<rect x="575" y="168" width="1" height="1"/>
<rect x="575" y="178" width="1" height="1"/>
<rect x="575" y="198" width="1" height="1"/>
<rect x="575" y="208" width="1" height="1"/>
<rect x="575" y="218" width="1" height="1"/>
<rect x="575" y="228" width="1" height="1"/>
<rect x="575" y="238" width="1" height="1"/>
<rect x="575" y="248" width="1" height="1"/>
<rect x="575" y="258" width="1" height="1"/>
<rect x="575" y="268" width="1" height="1"/>
<rect x="575" y="278" width="1" height="1"/>
<rect x="575" y="298" width="1" height="1"/>
<rect x="575" y="308" width="1" height="1"/>
<rect x="575" y="318" width="1" height="1"/>
<rect x="575" y="328" width="1" height="1"/>
<rect x="575" y="348" width="1" height="1"/>
<rect x="575" y="358" width="1" height="1"/>
<rect x="575" y="368" width="1" height="1"/>
<rect x="575" y="378" width="1" height="1"/>
<rect x="575" y="398" width="1" height="1"/>
<rect x="575" y="408" width="1" height="1"/>
<rect x="575" y="418" width="1" height="1"/>
<rect x="575" y="428" width="1" height="1"/>
<rect x="615" y="48" width="1" height="1"/>
<rect x="615" y="58" width="1" height="1"/>
<rect x="615" y="68" width="1" height="1"/>
<rect x="615" y="78" width="1" height="1"/>
<rect x="615" y="98" width="1" height="1"/>
<rect x="615" y="108" width="1" height="1"/>
<rect x="615" y="118" width="1" height="1"/>
<rect x="615" y="128" width="1" height="1"/>
<rect x="615" y="148" width="1" height="1"/>
<rect x="615" y="158" width="1" height="1"/>
<rect x="615" y="168" width="1" height="1"/>
<rect x="615" y="178" width="1" height="1"/>
<rect x="615" y="198" width="1" height="1"/>
<rect x="615" y="208" width="1" height="1"/>
<rect x="615" y="218" width="1" height="1"/>
<rect x="615" y="228" width="1" height="1"/>
<rect x="615" y="238" width="1" height="1"/>
<rect x="615" y="248" width="1" height="1"/>
<rect x="615" y="258" width="1" height="1"/>
<rect x="615" y="268" width="1" height="1"/>
<rect x="615" y="278" width="1" height="1"/>
<rect x="615" y="298" width="1" height="1"/>
<rect x="615" y="308" width="1" height="1"/>
<rect x="615" y="318" width="1" height="1"/>
<rect x="615" y="328" width="1" height="1"/>
<rect x="615" y="348" width="1" height="1"/>
<rect x="615" y="358" width="1" height="1"/>
<rect x="615" y="368" width="1" height="1"/>
<rect x="615" y="378" width="1" height="1"/>
<rect x="615" y="398" width="1" height="1"/>
<rect x="615" y="408" width="1" height="1"/>
<rect x="615" y="418" width="1" height="1"/>
<rect x="615" y="428" width="1" height="1"/>
<rect x="655" y="48" width="1" height="1"/>
<rect x="655" y="58" width="1" height="1"/>
<rect x="655" y="68" width="1" height="1"/>
<rect x="655" y="78" width="1" height="1"/>
<rect x="655" y="98" width="1" height="1"/>
<rect x="655" y="108" width="1" height="1"/>
<rect x="655" y="118" width="1" height="1"/>
<rect x="655" y="128" width="1" height="1"/>
<rect x="655" y="148" width="1" height="1"/>
<rect x="655" y="158" width="1" height="1"/>
<rect x="655" y="168" width="1" height="1"/>
<rect x="655" y="178" width="1" height="1"/>
<rect x="655" y="198" width="1" height="1"/>
<rect x="655" y="208" width="1" height="1"/>
<rect x="655" y="218" width="1" height="1"/>
<rect x="655" y="228" width="1" height="1"/>
<rect x="655" y="238" width="1" height="1"/>
<rect x="655" y="248" width="1" height="1"/>
<rect x="655" y="258" width="1" height="1"/>
<rect x="655" y="268" width="1" height="1"/>
<rect x="655" y="278" width="1" height="1"/>
<rect x="655" y="298" width="1" height="1"/>
<rect x="655" y="308" width="1" height="1"/>
<rect x="655" y="318" width="1" height="1"/>
<rect x="655" y="328" width="1" height="1"/>
<rect x="655" y="348" width="1" height="1"/>
<rect x="655" y="358" width="1" height="1"/>
<rect x="655" y="368" width="1" height="1"/>
<rect x="655" y="378" width="1" height="1"/>
<rect x="655" y="398" width="1" height="1"/>
<rect x="655" y="408" width="1" height="1"/>
<rect x="655" y="418" width="1" height="1"/>
<rect x="655" y="428" width="1" height="1"/>
<rect x="16" y="238" width="640" height="1"/>
<rect x="335" y="29" width="1" height="419"/>
<rect x="23" y="235" width="1" height="7"/>
<rect x="31" y="235" width="1" height="7"/>
<rect x="39" y="235" width="1" height="7"/>
<rect x="47" y="235" width="1" height="7"/>
<rect x="55" y="235" width="1" height="7"/>
<rect x="63" y="235" width="1" height="7"/>
<rect x="71" y="235" width="1" height="7"/>
<rect x="79" y="235" width="1" height="7"/>
<rect x="87" y="235" width="1" height="7"/>
<rect x="95" y="235" width="1" height="7"/>
<rect x="103" y="235" width="1" height="7"/>
<rect x="111" y="235" width="1" height="7"/>
<rect x="119" y="235" width="1" height="7"/>
<rect x="127" y="235" width="1" height="7"/>
<rect x="135" y="235" width="1" height="7"/>
<rect x="143" y="235" width="1" height="7"/>
<rect x="151" y="235" width="1" height="7"/>
<rect x="159" y="235" width="1" height="7"/>
<rect x="167" y="235" width="1" height="7"/>
<rect x="175" y="235" width="1" height="7"/>
<rect x="183" y="235" width="1" height="7"/>
<rect x="191" y="235" width="1" height="7"/>
<rect x="199" y="235" width="1" height="7"/>
<rect x="207" y="235" width="1" height="7"/>
<rect x="215" y="235" width="1" height="7"/>
<rect x="223" y="235" width="1" height="7"/>
<rect x="231" y="235" width="1" height="7"/>
<rect x="239" y="235" width="1" height="7"/>
<rect x="247" y="235" width="1" height="7"/>
<rect x="255" y="235" width="1" height="7"/>
<rect x="263" y="235" width="1" height="7"/>
<rect x="271" y="235" width="1" height="7"/>
<rect x="279" y="235" width="1" height="7"/>
<rect x="287" y="235" width="1" height="7"/>
<rect x="295" y="235" width="1" height="7"/>
<rect x="303" y="235" width="1" height="7"/>
<rect x="311" y="235" width="1" height="7"/>
<rect x="319" y="235" width="1" height="7"/>
<rect x="327" y="235" width="1" height="7"/>
<rect x="343" y="235" width="1" height="7"/>
<rect x="351" y="235" width="1" height="7"/>
<rect x="359" y="235" width="1" height="7"/>
<rect x="367" y="235" width="1" height="7"/>
<rect x="375" y="235" width="1" height="7"/>
<rect x="383" y="235" width="1" height="7"/>
<rect x="391" y="235" width="1" height="7"/>
<rect x="399" y="235" width="1" height="7"/>
<rect x="407" y="235" width="1" height="7"/>
<rect x="415" y="235" width="1" height="7"/>
<rect x="423" y="235" width="1" height="7"/>
<rect x="431" y="235" width="1" height="7"/>
<rect x="439" y="235" width="1" height="7"/>
<rect x="447" y="235" width="1" height="7"/>
<rect x="455" y="235" width="1" height="7"/>
<rect x="463" y="235" width="1" height="7"/>
<rect x="471" y="235" width="1" height="7"/>
<rect x="479" y="235" width="1" height="7"/>
<rect x="487" y="235" width="1" height="7"/>
<rect x="495" y="235" width="1" height="7"/>
<rect x="503" y="235" width="1" height="7"/>
<rect x="511" y="235" width="1" height="7"/>
<rect x="519" y="235" width="1" height="7"/>
<rect x="527" y="235" width="1" height="7"/>
<rect x="535" y="235" width="1" height="7"/>
<rect x="543" y="235" width="1" height="7"/>
<rect x="551" y="235" width="1" height="7"/>
<rect x="559" y="235" width="1" height="7"/>
<rect x="567" y="235" width="1" height="7"/>
<rect x="575" y="235" width="1" height="7"/>
<rect x="583" y="235" width="1" height="7"/>
<rect x="591" y="235" width="1" height="7"/>
<rect x="599" y="235" width="1" height="7"/>
<rect x="607" y="235" width="1" height="7"/>
<rect x="615" y="235" width="1" height="7"/>
<rect x="623" y="235" width="1" height="7"/>
<rect x="631" y="235" width="1" height="7"/>
<rect x="639" y="235" width="1" height="7"/>
<rect x="647" y="235" width="1" height="7"/>
<rect x="655" y="235" width="1" height="7"/>
<rect x="332" y="38" width="7" height="1"/>
<rect x="332" y="48" width="7" height="1"/>
<rect x="332" y="58" width="7" height="1"/>
<rect x="332" y="68" width="7" height="1"/>
<rect x="332" y="78" width="7" height="1"/>
<rect x="332" y="88" width="7" height="1"/>
<rect x="332" y="98" width="7" height="1"/>
<rect x="332" y="108" width="7" height="1"/>
<rect x="332" y="118" width="7" height="1"/>
<rect x="332" y="128" width="7" height="1"/>
<rect x="332" y="138" width="7" height="1"/>
<rect x="332" y="148" width="7" height="1"/>
<rect x="332" y="158" width="7" height="1"/>
<rect x="332" y="168" width="7" height="1"/>
<rect x="332" y="178" width="7" height="1"/>
<rect x="332" y="188" width="7" height="1"/>
<rect x="332" y="198" width="7" height="1"/>
<rect x="332" y="208" width="7" height="1"/>
<rect x="332" y="218" width="7" height="1"/>
<rect x="332" y="228" width="7" height="1"/>
<rect x="332" y="248" width="7" height="1"/>
<rect x="332" y="258" width="7" height="1"/>
<rect x="332" y="268" width="7" height="1"/>
<rect x="332" y="278" width="7" height="1"/>
<rect x="332" y="288" width="7" height="1"/>
<rect x="332" y="298" width="7" height="1"/>
<rect x="332" y="308" width="7" height="1"/>
<rect x="332" y="318" width="7" height="1"/>
<rect x="332" y="328" width="7" height="1"/>
<rect x="332" y="338" width="7" height="1"/>
<rect x="332" y="348" width="7" height="1"/>
<rect x="332" y="358" width="7" height="1"/>
<rect x="332" y="368" width="7" height="1"/>
<rect x="332" y="378" width="7" height="1"/>
<rect x="332" y="388" width="7" height="1"/>
<rect x="332" y="398" width="7" height="1"/>
<rect x="332" y="408" width="7" height="1"/>
<rect x="332" y="418" width="7" height="1"/>
<rect x="332" y="428" width="7" height="1"/>
<rect x="332" y="438" width="7" height="1"/>
</g>
<polyline fill="none" stroke="#ffff00" stroke-width="1.15" stroke-linejoin="round" points="16.5,369.5 27.5,369.5 28.0,371.5 28.5,369.5 38.5,369.5 39.0,371.5 42.0,359.5 44.5,367.5 46.5,356.5 47.0,344.5 47.5,333.5 47.8,307.5 48.5,279.5 50.5,246.5 52.5,261.5 55.5,275.5 58.5,285.5 61.5,275.5 64.0,267.5 66.5,275.5 68.5,281.5 70.5,278.5 73.5,270.5 76.5,274.5 80.2,279.5 83.5,271.5 88.0,271.5 91.0,277.5 95.5,271.5 99.0,271.5 100.5,273.5 105.0,273.5 106.5,271.5 113.0,271.5 114.0,273.5 117.5,273.5 121.0,267.5 123.5,271.5 125.5,274.5 127.5,271.5 131.5,271.5 132.5,269.5 134.5,269.5 135.5,271.5 138.5,271.5 139.0,269.5 140.0,271.5 142.5,271.5 143.5,269.5 149.5,269.5 150.5,271.5 152.0,269.5 173.5,269.5 174.5,267.5 176.5,269.5 179.0,267.5 180.5,269.5 182.5,267.5 185.5,267.5 186.5,269.5 188.5,269.5 190.0,267.5 191.5,269.5 192.7,265.5 194.2,265.5 195.0,267.5 195.7,265.5 196.5,267.5 197.2,265.5 198.5,265.5 199.5,267.5 206.2,267.5 207.0,265.5 211.5,265.5 212.2,268.5 213.0,265.5 218.2,265.5 219.0,262.5 219.7,266.5 223.1,266.5 223.8,262.5 224.7,265.5 228.0,265.5 228.7,262.5 229.5,265.5 233.2,265.5 234.0,263.5 235.5,263.5 236.2,266.5 237.7,263.5 240.0,263.5 241.5,266.5 243.0,262.5 244.5,265.5 250.5,265.5 250.8,263.5 258.5,263.5 259.0,260.5 259.5,263.5 267.0,263.5 267.7,261.5 270.7,261.5 271.5,264.5 273.0,261.5 273.7,263.5 282.0,263.5 282.7,261.5 287.2,261.5 288.0,258.5 289.5,262.5 291.0,263.5 294.7,263.5 295.5,262.5 297.7,259.5 300.0,259.5 300.7,261.5 314.5,261.5 316.5,266.5 319.5,279.5 322.0,301.5 325.0,307.5 328.5,307.5 335.5,321.5 340.5,321.5 345.5,327.5 352.5,327.5 356.5,331.5 359.5,333.5 361.5,331.5 363.5,331.5 366.5,335.5 368.5,337.5 370.5,335.5 372.5,335.5 374.5,337.5 388.5,337.5 392.5,339.5 400.5,339.5 403.5,341.5 405.5,341.5 406.5,341.5 407.5,339.5 408.5,339.5 409.5,342.5 410.5,339.5 411.5,339.5 413.5,344.5 415.5,341.5 421.5,341.5 422.5,343.5 431.5,343.5 433.5,345.5 435.5,345.5 436.5,343.5 438.0,345.5 441.5,345.5 442.0,343.5 443.0,345.5 451.5,345.5 452.0,348.5 453.0,345.5 456.5,345.5 457.5,347.5 459.5,347.5 461.0,345.5 462.5,345.5 463.5,347.5 468.5,347.5 469.0,350.5 470.0,347.5 476.5,347.5 477.5,349.5 481.5,349.5 482.0,347.5 483.0,349.5 511.5,349.5 512.5,351.5 516.5,351.5 518.5,349.5 520.5,351.5 535.5,351.5 537.5,353.5 538.5,353.5 539.5,351.5 542.5,351.5 543.5,354.5 544.5,351.5 552.5,351.5 553.5,353.5 556.5,353.5 557.5,351.5 558.5,353.5 559.5,354.5 560.5,351.5 561.5,353.5 569.5,353.5 570.5,351.5 571.5,353.5 580.5,353.5 581.5,351.5 582.5,353.5 588.5,353.5 589.5,351.5 594.5,351.5 596.5,349.5 598.5,349.5 600.5,347.5 601.5,345.5 602.5,347.5 606.5,347.5 608.5,345.5 610.5,343.5 612.5,345.5 614.5,345.5 615.5,343.5 617.5,346.5 619.5,343.5 637.5,343.5 639.5,341.5 641.5,344.5 642.5,341.5 644.5,344.5 645.5,341.5 655.5,341.5"/>
<polyline fill="none" stroke="#ffff00" stroke-width="1.15" stroke-linejoin="round" points="16.5,370.5 27.5,370.5 28.0,372.5 28.5,370.5 38.5,370.5 39.0,372.5 42.0,360.5 44.5,368.5 46.5,357.5 47.0,345.5 47.5,334.5 47.8,308.5 48.5,280.5 50.5,247.5 52.5,262.5 55.5,276.5 58.5,286.5 61.5,276.5 64.0,268.5 66.5,276.5 68.5,282.5 70.5,279.5 73.5,271.5 76.5,275.5 80.2,280.5 83.5,272.5 88.0,272.5 91.0,278.5 95.5,272.5 99.0,272.5 100.5,274.5 105.0,274.5 106.5,272.5 113.0,272.5 114.0,274.5 117.5,274.5 121.0,268.5 123.5,272.5 125.5,275.5 127.5,272.5 131.5,272.5 132.5,270.5 134.5,270.5 135.5,272.5 138.5,272.5 139.0,270.5 140.0,272.5 142.5,272.5 143.5,270.5 149.5,270.5 150.5,272.5 152.0,270.5 173.5,270.5 174.5,268.5 176.5,270.5 179.0,268.5 180.5,270.5 182.5,268.5 185.5,268.5 186.5,270.5 188.5,270.5 190.0,268.5 191.5,270.5 192.7,266.5 194.2,266.5 195.0,268.5 195.7,266.5 196.5,268.5 197.2,266.5 198.5,266.5 199.5,268.5 206.2,268.5 207.0,266.5 211.5,266.5 212.2,269.5 213.0,266.5 218.2,266.5 219.0,263.5 219.7,267.5 223.1,267.5 223.8,263.5 224.7,266.5 228.0,266.5 228.7,263.5 229.5,266.5 233.2,266.5 234.0,264.5 235.5,264.5 236.2,267.5 237.7,264.5 240.0,264.5 241.5,267.5 243.0,263.5 244.5,266.5 250.5,266.5 250.8,264.5 258.5,264.5 259.0,261.5 259.5,264.5 267.0,264.5 267.7,262.5 270.7,262.5 271.5,265.5 273.0,262.5 273.7,264.5 282.0,264.5 282.7,262.5 287.2,262.5 288.0,259.5 289.5,263.5 291.0,264.5 294.7,264.5 295.5,263.5 297.7,260.5 300.0,260.5 300.7,262.5 314.5,262.5 316.5,267.5 319.5,280.5 322.0,302.5 325.0,308.5 328.5,308.5 335.5,322.5 340.5,322.5 345.5,328.5 352.5,328.5 356.5,332.5 359.5,334.5 361.5,332.5 363.5,332.5 366.5,336.5 368.5,338.5 370.5,336.5 372.5,336.5 374.5,338.5 388.5,338.5 392.5,340.5 400.5,340.5 403.5,342.5 405.5,342.5 406.5,342.5 407.5,340.5 408.5,340.5 409.5,343.5 410.5,340.5 411.5,340.5 413.5,345.5 415.5,342.5 421.5,342.5 422.5,344.5 431.5,344.5 433.5,346.5 435.5,346.5 436.5,344.5 438.0,346.5 441.5,346.5 442.0,344.5 443.0,346.5 451.5,346.5 452.0,349.5 453.0,346.5 456.5,346.5 457.5,348.5 459.5,348.5 461.0,346.5 462.5,346.5 463.5,348.5 468.5,348.5 469.0,351.5 470.0,348.5 476.5,348.5 477.5,350.5 481.5,350.5 482.0,348.5 483.0,350.5 511.5,350.5 512.5,352.5 516.5,352.5 518.5,350.5 520.5,352.5 535.5,352.5 537.5,354.5 538.5,354.5 539.5,352.5 542.5,352.5 543.5,355.5 544.5,352.5 552.5,352.5 553.5,354.5 556.5,354.5 557.5,352.5 558.5,354.5 559.5,355.5 560.5,352.5 561.5,354.5 569.5,354.5 570.5,352.5 571.5,354.5 580.5,354.5 581.5,352.5 582.5,354.5 588.5,354.5 589.5,352.5 594.5,352.5 596.5,350.5 598.5,350.5 600.5,348.5 601.5,346.5 602.5,348.5 606.5,348.5 608.5,346.5 610.5,344.5 612.5,346.5 614.5,346.5 615.5,344.5 617.5,347.5 619.5,344.5 637.5,344.5 639.5,342.5 641.5,345.5 642.5,342.5 644.5,345.5 645.5,342.5 655.5,342.5"/>
<g fill="#fff" shape-rendering="crispEdges">
<rect x="46" y="45" width="1" height="10"/>
<rect x="46" y="63" width="1" height="10"/>
<rect x="46" y="81" width="1" height="10"/>
<rect x="46" y="99" width="1" height="10"/>
<rect x="46" y="117" width="1" height="10"/>
<rect x="46" y="135" width="1" height="10"/>
<rect x="46" y="153" width="1" height="10"/>
<rect x="46" y="171" width="1" height="10"/>
<rect x="46" y="189" width="1" height="10"/>
<rect x="46" y="207" width="1" height="10"/>
<rect x="46" y="225" width="1" height="10"/>
<rect x="46" y="243" width="1" height="10"/>
<rect x="46" y="261" width="1" height="10"/>
<rect x="46" y="279" width="1" height="10"/>
<rect x="46" y="297" width="1" height="10"/>
<rect x="46" y="315" width="1" height="10"/>
<rect x="46" y="333" width="1" height="10"/>
<rect x="46" y="351" width="1" height="10"/>
<rect x="46" y="369" width="1" height="10"/>
<rect x="46" y="387" width="1" height="10"/>
<rect x="46" y="405" width="1" height="10"/>
<rect x="46" y="423" width="1" height="10"/>
<rect x="46" y="441" width="1" height="7"/>
<rect x="316" y="45" width="1" height="10"/>
<rect x="316" y="63" width="1" height="10"/>
<rect x="316" y="81" width="1" height="10"/>
<rect x="316" y="99" width="1" height="10"/>
<rect x="316" y="117" width="1" height="10"/>
<rect x="316" y="135" width="1" height="10"/>
<rect x="316" y="153" width="1" height="10"/>
<rect x="316" y="171" width="1" height="10"/>
<rect x="316" y="189" width="1" height="10"/>
<rect x="316" y="207" width="1" height="10"/>
<rect x="316" y="225" width="1" height="10"/>
<rect x="316" y="243" width="1" height="10"/>
<rect x="316" y="261" width="1" height="10"/>
<rect x="316" y="279" width="1" height="10"/>
<rect x="316" y="297" width="1" height="10"/>
<rect x="316" y="315" width="1" height="10"/>
<rect x="316" y="333" width="1" height="10"/>
<rect x="316" y="351" width="1" height="10"/>
<rect x="316" y="369" width="1" height="10"/>
<rect x="316" y="387" width="1" height="10"/>
<rect x="316" y="405" width="1" height="10"/>
<rect x="316" y="423" width="1" height="10"/>
<rect x="316" y="441" width="1" height="7"/>
</g>
<polygon points="309,29.5 324,29.5 324,37.5 321,41 312,41 309,37.5" fill="#fff"/>
<polygon points="314,42 319.5,42 316.7,45" fill="#fff"/>
<path d="M320.5,32 H313 V40 H320.5 M313,35.8 H319.5" fill="none" stroke="#000" stroke-width="1.8"/>
<rect x="16" y="28" width="70" height="2" fill="#99ccff" shape-rendering="crispEdges"/>
<polygon points="16,29.5 86,29.5 86,42 83,45 54,45 48.5,52 43,45 19,45 16,42" fill="#3366ff"/>
<path d="M16.4,42 L19.2,44.6 H43 M54,44.6 H82.8 L85.6,42" fill="none" stroke="#6699ff" stroke-width="1"/>
<rect x="46" y="50" width="1" height="5" fill="#fff" shape-rendering="crispEdges"/>
<polygon points="643,297 656,289 656,305" fill="#ffff00"/>
<polygon points="0,363.5 9,363.5 15.5,370 9,376.5 0,376.5" fill="#ffff00"/>
</svg>


<svg width="800" height="480" viewBox="0 0 800 480">
<rect x="15.5" y="3.5" width="22" height="20" fill="#000" stroke="#aaaa98" stroke-width="1"/>
<rect x="40.5" y="3.5" width="22" height="20" fill="#000" stroke="#aaaa98" stroke-width="1"/>
<rect x="65.5" y="3.5" width="22" height="20" fill="#000" stroke="#aaaa98" stroke-width="1"/>
<polyline fill="none" stroke="#ffff00" stroke-width="2.4" points="16.30,10.13 16.80,9.19 17.30,8.24 17.80,7.36 18.30,6.65 18.80,6.18 19.30,6.00 19.80,6.12 20.30,6.54 20.80,7.21 21.30,8.05 21.80,9.00 22.30,9.95 22.80,10.79 23.30,11.46 23.80,11.88 24.30,12.00 24.80,11.82 25.30,11.35 25.80,10.64 26.30,9.76 26.80,8.81 27.30,7.87 27.80,7.06 28.30,6.43 28.80,6.08 29.30,6.01 29.80,6.26 30.30,6.78 30.80,7.53 31.30,8.43 31.80,9.38 32.30,10.30 32.80,11.09 33.30,11.66 33.80,11.96 34.30,11.96 34.80,11.66 35.30,11.09 35.80,10.30 36.30,9.38 36.80,8.43"/>
<polyline fill="none" stroke="#00ffff" stroke-width="2.4" points="16.30,18.83 16.80,17.89 17.30,16.94 17.80,16.06 18.30,15.35 18.80,14.88 19.30,14.70 19.80,14.82 20.30,15.24 20.80,15.91 21.30,16.75 21.80,17.70 22.30,18.65 22.80,19.49 23.30,20.16 23.80,20.58 24.30,20.70 24.80,20.52 25.30,20.05 25.80,19.34 26.30,18.46 26.80,17.51 27.30,16.57 27.80,15.76 28.30,15.13 28.80,14.78 29.30,14.71 29.80,14.96 30.30,15.48 30.80,16.23 31.30,17.13 31.80,18.08 32.30,19.00 32.80,19.79 33.30,20.36 33.80,20.66 34.30,20.66 34.80,20.36 35.30,19.79 35.80,19.00 36.30,18.08 36.80,17.13"/>
<line x1="44.6" y1="20.3" x2="58.7" y2="5.9" stroke="#00ff00" stroke-width="2.4" stroke-linecap="round"/>
<defs><filter id="bl" x="-20%" y="-20%" width="140%" height="140%"><feGaussianBlur stdDeviation="0.9"/></filter></defs>
<g filter="url(#bl)" fill="#969696"><ellipse cx="79" cy="9.8" rx="5" ry="4.6"/><ellipse cx="73.6" cy="17.4" rx="5.6" ry="4"/><rect x="74" y="9" width="6" height="9"/><circle cx="83.6" cy="13.5" r="1.3"/></g>
<path d="M90.5,21 V5.5 Q90.5,2.5 93.5,2.5 H133" fill="none" stroke="#000099" stroke-width="1"/>
<path d="M133,2.5 Q136,2.5 136,5.5 V20.5 Q136,23.5 133,23.5 H93.5 Q90.5,23.5 90.5,20.5" fill="none" stroke="#666" stroke-width="1"/>
<path d="M141,23 H147 V4.5 H156.5 V23 H162.5" fill="none" stroke="#00ccff" stroke-width="1.8"/>
<path d="M168.5,6.1 H182 M175.1,6.1 V21.5" fill="none" stroke="#00ff00" stroke-width="3.4"/>
<g fill="none" stroke="#4c4c4c" >
<path d="M190,13.8 H207" stroke-width="3.6"/>
<path d="M194.2,14 V18.8 M198.4,14 V17.6 M202.4,14 V19.2" stroke-width="2.6"/>
<ellipse cx="209.8" cy="15" rx="2.3" ry="4.6" stroke-width="2.4"/>
</g>
<path d="M216.8,3.6 H235.2 V21 L233.5,22.8 H218.5 L216.8,21 Z" fill="#333399" stroke="#ccffff" stroke-width="1.2"/>
<path d="M220,4 V12.3 H232 V4" fill="none" stroke="#99ccff" stroke-width="1"/>
<rect x="222" y="15.6" width="9.2" height="6.8" fill="#ccffff"/>
<rect x="223.2" y="16.6" width="2.4" height="5.6" fill="#003399"/>
<g fill="none" stroke="#4c4c4c">
<rect x="245.9" y="4.4" width="11.2" height="9" stroke-width="1.9"/>
<path d="M248.3,7.4 H254.8 M248.3,10.3 H254.8" stroke-width="1.4"/>
<rect x="242" y="13.7" width="19.2" height="9.1" rx="1.8" stroke-width="2.2"/>
<path d="M245,18.6 H258.3" stroke-width="2.6"/>
</g>
<rect x="266" y="1" width="1" height="26" fill="#000" shape-rendering="crispEdges"/>
<rect x="267" y="1" width="1" height="26" fill="#3366ff" shape-rendering="crispEdges"/>
<rect x="171" y="452" width="1" height="26" fill="#000" shape-rendering="crispEdges"/>
<rect x="172" y="452" width="1" height="26" fill="#3366ff" shape-rendering="crispEdges"/>
<rect x="331" y="452" width="1" height="26" fill="#000" shape-rendering="crispEdges"/>
<rect x="332" y="452" width="1" height="26" fill="#3366ff" shape-rendering="crispEdges"/>
<rect x="501" y="452" width="1" height="26" fill="#000" shape-rendering="crispEdges"/>
<rect x="502" y="452" width="1" height="26" fill="#3366ff" shape-rendering="crispEdges"/>
<rect x="273.5" y="3.5" width="21" height="20.5" fill="#000" stroke="#aaaa98" stroke-width="1"/>
<rect x="521.5" y="3.5" width="21" height="20.5" fill="#000" stroke="#aaaa98" stroke-width="1"/>
<rect x="299.0" y="2.8" width="100.0" height="21.7" rx="10.8" fill="#000"/>
<path d="M302.3,21.2 A10.8,10.8 0 0 1 309.9,2.8 H388.1" fill="none" stroke="#000099" stroke-width="1.2"/>
<path d="M395.7,6.1 A10.8,10.8 0 0 1 388.1,24.5 H309.9" fill="none" stroke="#666" stroke-width="1"/>
<rect x="547.2" y="2.5" width="99.0" height="22.2" rx="11.1" fill="#000"/>
<path d="M550.5,21.4 A11.1,11.1 0 0 1 558.3,2.5 H635.1" fill="none" stroke="#000099" stroke-width="1.2"/>
<path d="M642.9,5.8 A11.1,11.1 0 0 1 635.1,24.7 H558.3" fill="none" stroke="#666" stroke-width="1"/>
<rect x="86.8" y="453.0" width="82.4" height="21.7" rx="10.8" fill="#000"/>
<rect x="405.0" y="453.0" width="77.5" height="21.7" rx="10.8" fill="#000"/>
<rect x="513.0" y="453.0" width="129.5" height="21.7" rx="10.8" fill="#000"/>
<rect x="404" y="4" width="112" height="19.5" fill="#000" stroke="#666" stroke-width="1"/>
<polyline fill="none" stroke="#003c3c" stroke-width="1" points="405.5,7.5 407.4,19.5 409.4,7.5 411.3,19.5 413.3,7.5 415.2,19.5 417.2,7.5 419.1,19.5 421.1,7.5 423.0,19.5 425.0,7.5 426.9,19.5 428.9,7.5 430.8,19.5 432.8,7.5 434.7,19.5 436.7,7.5 438.6,19.5 440.6,7.5 442.5,19.5 444.5,7.5 446.4,19.5 448.4,7.5 450.3,19.5 452.3,7.5 454.2,19.5 456.2,7.5 458.1,19.5 460.1,7.5 462.0,19.5 464.0,7.5 465.9,19.5 467.9,7.5 469.8,19.5 471.8,7.5 473.7,19.5 475.7,7.5 477.6,19.5 479.6,7.5 481.5,19.5 483.5,7.5 485.4,19.5 487.4,7.5 489.3,19.5 491.3,7.5 493.2,19.5 495.2,7.5 497.1,19.5 499.1,7.5 501.0,19.5 503.0,7.5 504.9,19.5 506.9,7.5 508.8,19.5 510.8,7.5 512.7,19.5 514.7,7.5"/>
<rect x="453.6" y="4" width="11.4" height="18.8" fill="#000" stroke="#ff6600" stroke-width="2"/>
<path d="M455.4,13 L456.9,20.3 L459.3,6.6 L461.2,6.6 L463.1,19.8" fill="none" stroke="#00ddff" stroke-width="1.8" stroke-linejoin="round"/>
<rect x="16" y="456.5" width="18" height="2.4" fill="#ffff33"/>
<path d="M16,461.5 H33" stroke="#ffff33" stroke-width="1" stroke-dasharray="2.5,1.2" fill="none"/>
<circle cx="49" cy="465" r="9" fill="none" stroke="#505050" stroke-width="2"/>
<path d="M40.6,461.8 L44.2,459.2 L43.6,462.8 Z" fill="#555"/>
<path d="M41.5,469.3 L45,467.2" stroke="#555" stroke-width="1.5" fill="none"/>
<path d="M64.2,462.3 H67.5 V458.4 H71.5 V462.3 H74.5 V458.4 H78.5 V462.3 H81.8" fill="none" stroke="#ffff33" stroke-width="1.5"/>
<path d="M64.2,467.3 H67.5 V471 H71.5 V467.3 H74.5 V471 H78.5 V467.3 H81.8" fill="none" stroke="#888" stroke-width="1.5"/>
<path d="M385.2,472.6 H391 L396,456.4 H402.8" fill="none" stroke="#99ccff" stroke-width="1.7"/>
</svg>










<div class="a" style="left:656px;top:0;width:144px;height:480px;background:#3366ff;"></div>
<div class="a" style="left:656px;top:0;width:144px;height:28px;background:#6666ff;"></div>
<div class="a" style="left:657px;top:1px;width:143px;height:27px;background:#003399;"></div>
<div class="a" style="left:656px;top:28px;width:1px;height:230px;background:#c4c0b4;"></div>

<svg width="800" height="480" viewBox="0 0 800 480">
<rect x="777" y="3" width="21" height="21" fill="#ff3300"/>
<path d="M781.6,6.8 L793.4,19.8 M793.4,6.8 L781.6,19.8" stroke="#fff" stroke-width="2.6" fill="none"/>
<rect x="662" y="42" width="1" height="87" fill="#6d9be8" shape-rendering="crispEdges"/>
<path d="M662.5,41.8 L665.5,38.5 H708.0 M758.0,38.5 H810" fill="none" stroke="#003399" stroke-width="1"/>
<path d="M665.5,39.5 H708.0 M758.0,39.5 H810" fill="none" stroke="#6d9be8" stroke-width="1"/>
<path d="M662.5,128.2 L665.5,131.5 H810" fill="none" stroke="#003399" stroke-width="1"/>
<path d="M665.5,132.5 H810" fill="none" stroke="#6d9be8" stroke-width="1"/>
<rect x="662" y="147" width="1" height="107" fill="#6d9be8" shape-rendering="crispEdges"/>
<path d="M662.5,146.8 L665.5,143.5 H698.8 M767.0,143.5 H810" fill="none" stroke="#003399" stroke-width="1"/>
<path d="M665.5,144.5 H698.8 M767.0,144.5 H810" fill="none" stroke="#6d9be8" stroke-width="1"/>
<path d="M662.5,253.2 L665.5,256.5 H810" fill="none" stroke="#003399" stroke-width="1"/>
<path d="M665.5,257.5 H810" fill="none" stroke="#6d9be8" stroke-width="1"/>
<circle cx="671.8" cy="58.4" r="6.3" fill="none" stroke="#ccffff" stroke-width="1.1"/>
<circle cx="671.8" cy="79.4" r="6.3" fill="none" stroke="#ff9900" stroke-width="1.1"/>
<circle cx="671.8" cy="79.4" r="1.6" fill="#ff9900"/>
<circle cx="671.8" cy="100.5" r="6.3" fill="none" stroke="#ccffff" stroke-width="1.1"/>
<circle cx="671.8" cy="121.5" r="6.3" fill="none" stroke="#ccffff" stroke-width="1.1"/>
<circle cx="671.8" cy="163.3" r="6.3" fill="none" stroke="#ff9900" stroke-width="1.1"/>
<circle cx="671.8" cy="163.3" r="1.6" fill="#ff9900"/>
<circle cx="671.8" cy="183.2" r="6.3" fill="none" stroke="#ccffff" stroke-width="1.1"/>
<circle cx="671.8" cy="203.2" r="6.3" fill="none" stroke="#ccffff" stroke-width="1.1"/>
<circle cx="671.8" cy="223.2" r="6.3" fill="none" stroke="#ccffff" stroke-width="1.1"/>
<circle cx="671.8" cy="243.2" r="6.3" fill="none" stroke="#ccffff" stroke-width="1.1"/>
<circle cx="671.8" cy="304.3" r="6.3" fill="none" stroke="#ccffff" stroke-width="1.1"/>
<circle cx="671.8" cy="356.5" r="6.3" fill="none" stroke="#ff9900" stroke-width="1.1"/>
<circle cx="671.8" cy="356.5" r="1.6" fill="#ff9900"/>
<polygon points="792,164.5 787.5,173.3 796.5,173.3" fill="#00ff00"/>
<polygon points="788,245.8 796.3,245.8 792.2,253" fill="#00ff00"/>
<path d="M810,268.5 H667 Q662.5,268.5 662.5,273 V377 L666,381 H810" fill="none" stroke="#f0640a" stroke-width="1.2"/>
<path d="M665,381.3 H810" fill="none" stroke="#ff6600" stroke-width="2.6"/>
<rect x="670" y="259" width="126" height="19.8" rx="9.9" fill="#ff6600"/>
<rect x="700.5" y="286.5" width="89.0" height="21.0" rx="4" fill="none" stroke="#808080" stroke-width="1"/>
<rect x="700.5" y="334.5" width="89.0" height="21.0" rx="4" fill="none" stroke="#808080" stroke-width="1"/>
<rect x="710.5" y="403.5" width="79.0" height="22.0" rx="4" fill="none" stroke="#808080" stroke-width="1"/>
<rect x="710.5" y="422.5" width="79.0" height="22.5" rx="4" fill="none" stroke="#808080" stroke-width="1"/>
</svg>




















<svg width="800" height="480" viewBox="0 0 800 480" font-family="Liberation Sans, sans-serif"><g font-size="16.80" fill="#fff" stroke="#3366ff" stroke-width="0.15"><text stroke-width="0.03" transform="translate(23.80,43.00) scale(0.829,1)">2</text><text stroke-width="0.03" transform="translate(31.94,43.00) scale(0.829,1)">8</text><text stroke-width="0.03" transform="translate(40.07,43.00) scale(0.829,1)">7</text><text stroke-width="0.28" x="48.80" y="43.00">.</text><text stroke-width="0.03" transform="translate(54.50,43.00) scale(0.829,1)">0</text><text stroke-width="0.03" transform="translate(62.64,43.00) scale(0.829,1)">n</text><text stroke-width="0.17" transform="translate(70.77,43.00) scale(0.920,1)">s</text></g>
<g font-size="14.00" fill="#000099" stroke="#000099" stroke-width="0.4"><text x="1.30" y="374.80">1</text></g>
<g font-size="18.00" fill="#ccffff" font-weight="bold"><text x="276.90" y="20.10">M</text></g>
<g font-size="18.00" fill="#ccffff" font-weight="bold"><text x="523.40" y="21.00">W</text></g>
<g font-size="18.00" fill="#fff" stroke="#000" stroke-width="0.15"><text stroke-width="0.03" transform="translate(324.80,21.00) scale(0.829,1)">2</text><text stroke-width="0.03" transform="translate(334.66,21.00) scale(0.829,1)">0</text><text stroke-width="0.03" transform="translate(344.51,21.00) scale(0.829,1)">0</text><text stroke-width="0.03" transform="translate(354.37,21.00) scale(0.829,1)">n</text><text stroke-width="0.17" transform="translate(364.22,21.00) scale(0.920,1)">s</text></g>
<g font-size="18.00" fill="#fff" stroke="#000" stroke-width="0.15"><text stroke-width="0.03" transform="translate(570.00,21.00) scale(0.829,1)">4</text><text stroke-width="0.03" transform="translate(579.46,21.00) scale(0.829,1)">0</text><text stroke-width="0.28" x="589.55" y="21.00">.</text><text stroke-width="0.03" transform="translate(596.40,21.00) scale(0.829,1)">0</text><text stroke-width="0.03" transform="translate(605.86,21.00) scale(0.829,1)">n</text><text stroke-width="0.17" transform="translate(615.32,21.00) scale(0.920,1)">s</text></g>
<g font-size="12.40" fill="#eeee33" stroke="#eeee33" stroke-width="0.45"><text x="16.20" y="473.40">D</text><text x="23.27" y="473.40">C</text></g>
<g font-size="14.20" fill="#505050" font-weight="bold" stroke="#505050" stroke-width="0.3"><text transform="translate(43.40,469.70) scale(0.711,1)">2</text><text transform="translate(49.70,469.70) scale(0.711,1)">0</text></g>
<g font-size="18.00" fill="#ffff00" stroke="#000" stroke-width="0.15"><text stroke-width="0.03" transform="translate(106.50,472.00) scale(0.829,1)">1</text><text stroke-width="0.28" x="116.56" y="472.00">.</text><text stroke-width="0.03" transform="translate(123.37,472.00) scale(0.829,1)">0</text><text stroke-width="0.03" transform="translate(132.79,472.00) scale(0.829,1)">0</text><text stroke-width="0.00" transform="translate(142.22,472.00) scale(0.692,1)">V</text></g>
<g font-size="18.00" fill="#ffff00" stroke="#333399" stroke-width="0.15"><text stroke-width="0.00" transform="translate(353.50,471.00) scale(0.639,1)">C</text><text stroke-width="0.00" transform="translate(361.91,471.00) scale(0.639,1)">H</text><text stroke-width="0.03" transform="translate(370.32,471.00) scale(0.829,1)">1</text></g>
<g font-size="18.00" fill="#ffff00" stroke="#000" stroke-width="0.15"><text stroke-width="0.03" transform="translate(422.50,471.00) scale(0.829,1)">1</text><text stroke-width="0.28" x="432.48" y="471.00">.</text><text stroke-width="0.03" transform="translate(439.22,471.00) scale(0.829,1)">4</text><text stroke-width="0.03" transform="translate(448.57,471.00) scale(0.829,1)">4</text><text stroke-width="0.00" transform="translate(457.92,471.00) scale(0.692,1)">V</text></g>
<g font-size="18.00" fill="#ffff00" stroke="#000" stroke-width="0.15"><text stroke-width="0.03" transform="translate(530.50,471.00) scale(0.829,1)">6</text><text stroke-width="0.03" transform="translate(540.21,471.00) scale(0.829,1)">2</text><text stroke-width="0.28" x="550.55" y="471.00">.</text><text stroke-width="0.03" transform="translate(557.65,471.00) scale(0.829,1)">3</text><text stroke-width="0.03" transform="translate(567.36,471.00) scale(0.829,1)">5</text><text stroke-width="0.03" transform="translate(577.08,471.00) scale(0.829,1)">0</text><text stroke-width="0.03" transform="translate(586.79,471.00) scale(0.829,1)">0</text><text stroke-width="0.00" transform="translate(596.50,471.00) scale(0.692,1)">K</text><text stroke-width="0.00" transform="translate(606.21,471.00) scale(0.639,1)">H</text><text stroke-width="0.17" transform="translate(615.92,471.00) scale(0.920,1)">z</text></g>
<g font-size="19.60" fill="#fff" stroke="#fff" stroke-width="0.3"><text x="686.60" y="20.10">C</text><text x="701.46" y="20.10">u</text><text x="713.08" y="20.10">r</text><text x="720.31" y="20.10">s</text><text x="730.82" y="20.10">o</text><text x="742.43" y="20.10">r</text></g>
<g font-size="18.00" fill="#ccffff" stroke="#3366ff" stroke-width="0.15"><text stroke-width="0.00" transform="translate(714.00,44.00) scale(0.754,1)">T</text><text stroke-width="0.17" transform="translate(724.01,44.00) scale(0.920,1)">y</text><text stroke-width="0.03" transform="translate(734.01,44.00) scale(0.829,1)">p</text><text stroke-width="0.03" transform="translate(744.02,44.00) scale(0.829,1)">e</text></g>
<g font-size="18.00" fill="#ccffff" stroke="#3366ff" stroke-width="0.15"><text stroke-width="0.00" transform="translate(683.00,65.00) scale(0.590,1)">O</text><text stroke-width="0.42" transform="translate(693.66,65.00) scale(1.300,1)">f</text><text stroke-width="0.42" transform="translate(703.45,65.00) scale(1.300,1)">f</text></g>
<g font-size="18.00" fill="#ff9900" stroke="#3366ff" stroke-width="0.15"><text stroke-width="0.00" transform="translate(683.00,86.00) scale(0.754,1)">T</text><text stroke-width="0.28" x="694.01" y="86.00">i</text><text stroke-width="0.00" transform="translate(700.70,86.00) scale(0.551,1)">m</text><text stroke-width="0.03" transform="translate(710.72,86.00) scale(0.829,1)">e</text></g>
<g font-size="18.00" fill="#ccffff" stroke="#3366ff" stroke-width="0.15"><text stroke-width="0.00" transform="translate(682.60,107.00) scale(0.692,1)">V</text><text stroke-width="0.03" transform="translate(692.20,107.00) scale(0.829,1)">o</text><text stroke-width="0.28" x="702.79" y="107.00">l</text><text stroke-width="0.42" transform="translate(708.75,107.00) scale(1.300,1)">t</text><text stroke-width="0.01" transform="translate(716.32,107.00) scale(0.821,1)">a</text><text stroke-width="0.03" transform="translate(725.92,107.00) scale(0.829,1)">g</text><text stroke-width="0.03" transform="translate(735.52,107.00) scale(0.829,1)">e</text></g>
<g font-size="18.00" fill="#ccffff" stroke="#3366ff" stroke-width="0.15"><text stroke-width="0.00" transform="translate(683.30,128.00) scale(0.754,1)">T</text><text stroke-width="0.28" x="692.66" y="128.00">r</text><text stroke-width="0.01" transform="translate(699.77,128.00) scale(0.821,1)">a</text><text stroke-width="0.17" transform="translate(708.54,128.00) scale(0.920,1)">c</text><text stroke-width="0.16" transform="translate(717.32,128.00) scale(0.911,1)">k</text></g>
<g font-size="18.00" fill="#ccffff" stroke="#3366ff" stroke-width="0.15"><text stroke-width="0.00" transform="translate(704.60,149.50) scale(0.692,1)">S</text><text stroke-width="0.03" transform="translate(714.50,149.50) scale(0.829,1)">o</text><text stroke-width="0.03" transform="translate(724.40,149.50) scale(0.829,1)">u</text><text stroke-width="0.28" x="734.88" y="149.50">r</text><text stroke-width="0.17" transform="translate(743.12,149.50) scale(0.920,1)">c</text><text stroke-width="0.03" transform="translate(753.02,149.50) scale(0.829,1)">e</text></g>
<g font-size="18.00" fill="#ff9900" stroke="#3366ff" stroke-width="0.15"><text stroke-width="0.00" transform="translate(682.80,170.00) scale(0.639,1)">C</text><text stroke-width="0.00" transform="translate(691.01,170.00) scale(0.639,1)">H</text><text stroke-width="0.03" transform="translate(699.22,170.00) scale(0.829,1)">1</text></g>
<g font-size="18.00" fill="#ccffff" stroke="#3366ff" stroke-width="0.15"><text stroke-width="0.00" transform="translate(683.00,190.00) scale(0.639,1)">C</text><text stroke-width="0.00" transform="translate(692.56,190.00) scale(0.639,1)">H</text><text stroke-width="0.03" transform="translate(702.13,190.00) scale(0.829,1)">2</text><text stroke-width="0.42" transform="translate(712.21,187.48) scale(1.200,0.8)">(</text><text stroke-width="0.03" transform="translate(721.25,190.00) scale(0.829,1)">o</text><text stroke-width="0.42" transform="translate(731.68,190.00) scale(1.300,1)">f</text><text stroke-width="0.42" transform="translate(741.24,190.00) scale(1.300,1)">f</text><text stroke-width="0.42" transform="translate(750.46,187.48) scale(1.200,0.8)">)</text></g>
<g font-size="18.00" fill="#ccffff" stroke="#3366ff" stroke-width="0.15"><text stroke-width="0.00" transform="translate(682.60,210.00) scale(0.551,1)">M</text><text stroke-width="0.00" transform="translate(692.26,210.00) scale(0.687,1)">A</text><text stroke-width="0.00" transform="translate(701.91,210.00) scale(0.754,1)">T</text><text stroke-width="0.00" transform="translate(711.57,210.00) scale(0.639,1)">H</text><text stroke-width="0.42" transform="translate(721.74,207.48) scale(1.200,0.8)">(</text><text stroke-width="0.03" transform="translate(730.88,210.00) scale(0.829,1)">o</text><text stroke-width="0.42" transform="translate(741.40,210.00) scale(1.300,1)">f</text><text stroke-width="0.42" transform="translate(751.05,210.00) scale(1.300,1)">f</text><text stroke-width="0.42" transform="translate(760.36,207.48) scale(1.200,0.8)">)</text></g>
<g font-size="18.00" fill="#ccffff" stroke="#3366ff" stroke-width="0.15"><text stroke-width="0.00" transform="translate(683.00,230.00) scale(0.639,1)">R</text><text stroke-width="0.03" transform="translate(692.61,230.00) scale(0.829,1)">e</text><text stroke-width="0.42" transform="translate(703.07,230.00) scale(1.300,1)">f</text><text stroke-width="0.00" transform="translate(711.82,230.00) scale(0.687,1)">A</text><text stroke-width="0.42" transform="translate(721.94,227.48) scale(1.200,0.8)">(</text><text stroke-width="0.03" transform="translate(731.03,230.00) scale(0.829,1)">o</text><text stroke-width="0.42" transform="translate(741.50,230.00) scale(1.300,1)">f</text><text stroke-width="0.42" transform="translate(751.10,230.00) scale(1.300,1)">f</text><text stroke-width="0.42" transform="translate(760.36,227.48) scale(1.200,0.8)">)</text></g>
<g font-size="18.00" fill="#ccffff" stroke="#3366ff" stroke-width="0.15"><text stroke-width="0.00" transform="translate(683.00,250.00) scale(0.639,1)">R</text><text stroke-width="0.03" transform="translate(692.61,250.00) scale(0.829,1)">e</text><text stroke-width="0.42" transform="translate(703.07,250.00) scale(1.300,1)">f</text><text stroke-width="0.00" transform="translate(711.82,250.00) scale(0.692,1)">B</text><text stroke-width="0.42" transform="translate(721.94,247.48) scale(1.200,0.8)">(</text><text stroke-width="0.03" transform="translate(731.03,250.00) scale(0.829,1)">o</text><text stroke-width="0.42" transform="translate(741.50,250.00) scale(1.300,1)">f</text><text stroke-width="0.42" transform="translate(751.10,250.00) scale(1.300,1)">f</text><text stroke-width="0.42" transform="translate(760.36,247.48) scale(1.200,0.8)">)</text></g>
<g font-size="18.00" fill="#ffffee" stroke="#ff6600" stroke-width="0.15"><text stroke-width="0.00" transform="translate(675.40,274.60) scale(0.692,1)">S</text><text stroke-width="0.03" transform="translate(685.07,274.60) scale(0.829,1)">e</text><text stroke-width="0.28" x="695.74" y="274.60">l</text><text stroke-width="0.03" transform="translate(702.08,274.60) scale(0.829,1)">e</text><text stroke-width="0.17" transform="translate(711.76,274.60) scale(0.920,1)">c</text><text stroke-width="0.42" transform="translate(721.12,274.60) scale(1.300,1)">t</text><text stroke-width="0.17" transform="translate(736.10,274.60) scale(0.920,1)">c</text><text stroke-width="0.03" transform="translate(745.77,274.60) scale(0.829,1)">u</text><text stroke-width="0.28" x="756.03" y="274.60">r</text><text stroke-width="0.17" transform="translate(764.04,274.60) scale(0.920,1)">s</text><text stroke-width="0.03" transform="translate(773.71,274.60) scale(0.829,1)">o</text><text stroke-width="0.28" x="783.97" y="274.60">r</text></g>
<g font-size="18.00" fill="#ccffff" stroke="#3366ff" stroke-width="0.15"><text stroke-width="0.00" transform="translate(683.00,311.00) scale(0.692,1)">S</text></g>
<g font-size="18.00" fill="#ff9900" stroke="#3366ff" stroke-width="0.15"><text stroke-width="0.00" transform="translate(683.00,363.00) scale(0.692,1)">E</text></g>
<g font-size="18.00" fill="#ccffff" stroke="#3366ff" stroke-width="0.15"><text stroke-width="0.03" transform="translate(712.50,304.00) scale(0.829,1)">2</text><text stroke-width="0.28" x="722.70" y="304.00">.</text><text stroke-width="0.03" transform="translate(729.65,304.00) scale(0.829,1)">0</text><text stroke-width="0.03" transform="translate(739.22,304.00) scale(0.829,1)">0</text><text stroke-width="0.03" transform="translate(748.79,304.00) scale(0.829,1)">0</text><text stroke-width="0.03" transform="translate(758.35,304.00) scale(0.829,1)">n</text><text stroke-width="0.17" transform="translate(767.92,304.00) scale(0.920,1)">s</text></g>
<g font-size="18.00" fill="#ff9900" stroke="#3366ff" stroke-width="0.15"><text stroke-width="0.42" transform="translate(706.80,352.40) scale(1.373,1)">-</text><text stroke-width="0.03" transform="translate(716.50,352.40) scale(0.829,1)">2</text><text stroke-width="0.03" transform="translate(726.20,352.40) scale(0.829,1)">6</text><text stroke-width="0.03" transform="translate(735.90,352.40) scale(0.829,1)">8</text><text stroke-width="0.28" x="746.23" y="352.40">.</text><text stroke-width="0.03" transform="translate(753.32,352.40) scale(0.829,1)">0</text><text stroke-width="0.03" transform="translate(763.02,352.40) scale(0.829,1)">n</text><text stroke-width="0.17" transform="translate(772.72,352.40) scale(0.920,1)">s</text></g>
<g font-size="18.00" fill="#ccffff" stroke="#3366ff" stroke-width="0.15"><text stroke-width="0.03" transform="translate(717.50,422.00) scale(0.829,1)">2</text><text stroke-width="0.03" transform="translate(727.03,422.00) scale(0.829,1)">7</text><text stroke-width="0.03" transform="translate(736.57,422.00) scale(0.829,1)">0</text><text stroke-width="0.28" x="746.73" y="422.00">.</text><text stroke-width="0.03" transform="translate(753.65,422.00) scale(0.829,1)">0</text><text stroke-width="0.03" transform="translate(763.19,422.00) scale(0.829,1)">n</text><text stroke-width="0.17" transform="translate(772.72,422.00) scale(0.920,1)">s</text></g>
<g font-size="18.00" fill="#ccffff" stroke="#3366ff" stroke-width="0.15"><text stroke-width="0.03" transform="translate(717.50,441.00) scale(0.829,1)">3</text><text stroke-width="0.28" x="727.66" y="441.00">.</text><text stroke-width="0.03" transform="translate(734.59,441.00) scale(0.829,1)">7</text><text stroke-width="0.03" transform="translate(744.12,441.00) scale(0.829,1)">0</text><text stroke-width="0.00" transform="translate(753.65,441.00) scale(0.551,1)">M</text><text stroke-width="0.00" transform="translate(763.19,441.00) scale(0.639,1)">H</text><text stroke-width="0.17" transform="translate(772.72,441.00) scale(0.920,1)">z</text></g>
<g font-size="18.00" fill="#ccffff" stroke="#3366ff" stroke-width="0.15"><text stroke-width="0.03" transform="translate(670.80,422.00) scale(0.829,1)">d</text><text stroke-width="0.42" transform="translate(681.45,422.00) scale(1.300,1)">t</text></g>
<g font-size="18.00" fill="#ccffff" stroke="#3366ff" stroke-width="0.15"><text stroke-width="0.03" transform="translate(671.30,441.00) scale(0.829,1)">1</text><text stroke-width="0.42" transform="translate(681.38,441.00) scale(1.643,1)">/</text><text stroke-width="0.03" transform="translate(691.47,441.00) scale(0.829,1)">d</text><text stroke-width="0.42" transform="translate(701.25,441.00) scale(1.300,1)">t</text></g></svg>
</body></html>
